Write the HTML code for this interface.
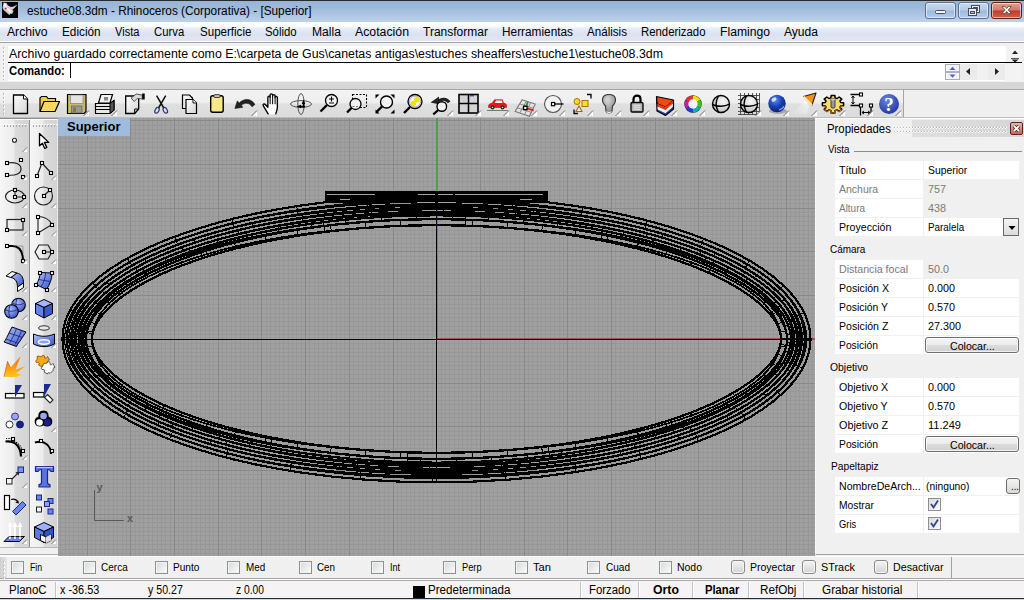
<!DOCTYPE html>
<html lang="es"><head><meta charset="utf-8"><title>estuche08.3dm - Rhinoceros (Corporativa) - [Superior]</title>
<style>
html,body{margin:0;padding:0}
body{width:1024px;height:600px;overflow:hidden;position:relative;background:#f0f0f0;font-family:"Liberation Sans",sans-serif;font-size:12px;color:#000}
.abs,.abs *{position:absolute}
div,span,svg{box-sizing:border-box}
span{white-space:nowrap;line-height:1;transform-origin:0 50%}
#title{left:0;top:0;width:1024px;height:22px;background:linear-gradient(#98b4d6 0,#9db9da 30%,#bed2eb 100%);border-top:1px solid #2a2a2a}
#title .t{line-height:14px;color:#000}
.wb{top:1px;height:17px;border:1px solid #5d6f8a;border-radius:3px;background:linear-gradient(#c5d7ee 0,#b4cbe8 48%,#9db9dd 52%,#b7cdea 100%);box-shadow:inset 0 0 0 1px rgba(255,255,255,.55)}
#menu{left:0;top:22px;width:1024px;height:19px;background:linear-gradient(#fff 0,#fcfcfe 22%,#e7ebf7 36%,#dde2f1 62%,#e1e5f3 100%)}
#menu span{line-height:14px}
#menuline{left:0;top:41px;width:1024px;height:3px;background:#f4f4f4;border-top:1px solid #fff}
#menuline i{left:0;top:0;width:1024px;height:1px;background:#a0a0a0}
#cmd{left:0;top:44px;width:1024px;height:38px;background:#f0f0f0}
#cmd .grip{left:3px;top:3px;width:3px;height:33px}
#cmd .box{left:8px;top:2px;width:998px;height:35px;background:#fff}
#cmd .hist{line-height:14px}
#cmd .prompt{line-height:14px}
#cmd .line{left:8px;top:18px;width:1014px;height:1px;background:#000}
#cmd .caret{left:70px;top:19px;width:1px;height:15px;background:#000}
#cmd .vs{left:1006px;top:2px;width:16px;height:16px;background:#f3f3f3}
#cmd .spin{left:945px;top:20px;width:15px;height:16px;border:1px solid #aab;background:#f4f4f6}
#cmd .hs{left:960px;top:20px;width:45px;height:16px;background:#ebebeb}
#cmd .hs2{left:1005px;top:19px;width:17px;height:18px;background:#f3f3f3}
#gap1{left:0;top:82px;width:1024px;height:8px;background:#d6d6d6;border-bottom:1px solid #a6a6a6}
#tbl{left:0;top:117px;width:1024px;height:1px;background:#bcbcbc}
#tb{left:0;top:90px;width:904px;height:28px;background:linear-gradient(#f3f3f3 0,#eeeeee 44%,#dfdfdf 52%,#dcdcdc 100%);border-right:1px solid #a4a4a4}
#tbr{left:904px;top:90px;width:120px;height:28px;background:#efefef}
#tb svg.ic{top:2px;width:24px;height:24px;overflow:visible}
#tb .fly{width:6px;height:6px}
#lt{left:0;top:118px;width:58px;height:429px;background:#e4e4e4;border-top:1px solid #909090}
#lt .wl{left:0;top:0;width:58px;height:1px;background:#fdfdfd}
#lt .col{top:0;height:429px;background:linear-gradient(90deg,#f6f6f6 0,#ececec 47%,#dbdbdb 53%,#d3d3d3 100%)}
#lt .sep{top:0;width:1px;height:429px;background:#8e8e8e}
#lt .sep2{top:0;width:1px;height:429px;background:#e8e8e8}
#lt svg.ic{width:24px;height:24px;overflow:visible}
#ltb{left:0;top:547px;width:58px;height:9px;background:linear-gradient(#f0f0f0 0,#f0f0f0 6px,#b0b0b0 6px,#b0b0b0 7px,#fbfbfb 7px);border-top:1px solid #b8b8b8}
#vp{left:58px;top:118px;width:757px;height:438px;overflow:hidden;background:#a0a0a0}
#vp .lbl{left:0;top:0;width:72px;height:18px;background:#a0bcdc}
#vp .lbl span{left:9px;top:2px;font-weight:bold;font-size:13px;line-height:14px}
#pp{left:815px;top:118px;width:209px;height:437px;background:#f0f0f0;border-left:1px solid #f8f8f8;border-top:1px solid #fcfcfc;border-bottom:1px solid #a2a2a2;font-size:11px}
#pp .ttl{line-height:14px}
#pp .hb{left:96px;top:1px;width:112px;height:17px;background:linear-gradient(90deg,#dfdfdf,#d6d6d6)}
#pp .cls{left:194px;top:3px;width:13px;height:13px;border:1px solid #5e2222;border-radius:2px;background:linear-gradient(#eab4aa,#cc6458)}
#pp .grp{line-height:13px}
#pp .gl{left:38px;top:32px;width:168px;height:1px;background:#8c8c8c}
#pp .cl{left:19px;width:88px;height:18px;background:#fff}
#pp .cv{left:108px;width:95px;height:18px;background:#fff}
#pp .cv.ro{background:#f0f0f0}
#pp .cl span{line-height:13px}
#pp .cv span{line-height:13px}
#pp span.g{color:#7a7a7a}
#pp .btn{left:1px;top:1px;width:94px;height:16px;border:1px solid #6e6e6e;border-radius:3px;background:linear-gradient(#f4f4f4 0,#ececec 48%,#dcdcdc 52%,#d0d0d0 100%);box-shadow:inset 0 0 0 1px rgba(255,255,255,.7)}
#pp .btn span{line-height:13px}
#pp .dd{left:79px;top:0;width:16px;height:18px;border:1px solid #6a6a6a;background:linear-gradient(#f4f4f4,#dcdcdc)}
#pp .dots{left:82px;top:1px;width:14px;height:16px;border:1px solid #6e6e6e;border-radius:3px;background:linear-gradient(#f4f4f4,#d8d8d8)}
#pp .dots span{line-height:13px}
#pp .chk{left:4px;top:2px;width:13px;height:13px;border:1px solid #8e8f8f;background:linear-gradient(135deg,#dcdcdc,#fafafa)}
#os{left:0;top:556px;width:1024px;height:24px;background:#f0f0f0;border-top:1px solid #fdfdfd;border-bottom:1px solid #fbfbfb;font-size:11px}
#os span{line-height:13px}
#os .cb{top:4px;width:13px;height:13px;border:1px solid #8e8f8f;background:linear-gradient(135deg,#d4d8dc,#fcfcfc);box-shadow:inset 0 0 0 1px #f4f4f4}
#os .cb.r{border-radius:3px;width:14px;height:14px;top:3px;background:linear-gradient(#f4f4f4,#d4d4d4);border-color:#8a8a8a}
#os .end{left:951px;top:0px;width:1px;height:21px;background:#a0a0a0}
#os .bl{left:0;top:21px;width:1024px;height:1px;background:#a8a8a8}
#os .gr{left:0;top:0;width:7px;height:21px;background:linear-gradient(90deg,#cfcfcf,#e6e6e6)}
#st{left:0;top:580px;width:1024px;height:18px;background:#f5f3f3;border-top:1px solid #adadad;font-size:12px}
#st span{line-height:14px}
#st i{top:1px;width:2px;height:16px;background:linear-gradient(90deg,#c4c4c4 50%,#fff 50%)}
#st .sw{left:413px;top:5px;width:12px;height:12px;background:#000}
#stb{left:0;top:598px;width:1024px;height:2px;background:#c4d8ee;border-top:1px solid #2a2a2a}

</style></head>
<body>
<div id="title" class="abs">
 <svg width="16" height="16" style="left:2px;top:1px" viewBox="0 0 16 16"><rect width="16" height="16" fill="#050505"/><path d="M1.500 0.500l3 .5 1.500 2.500 3 1.500 2.500-.5 4-2-3 3.500-2 1.500 1 2-1.500 2.500-1.500-.5-1 1.500-1.500-1-2-2-2-1.500-1.500-2.500z" fill="#cfcfcf"/><path d="M2 1l2 1.500 1 3 3 2 1.500 3-1.500.5-2.500-3-3-1z" fill="#f4f4f4"/><circle cx="3.600" cy="6.500" r="1" fill="#e01818"/></svg>
 <span class="t" style="left:26.5px;top:3px;font-size:12px;transform:scaleX(0.983);">estuche08.3dm - Rhinoceros (Corporativa) - [Superior]</span>
 <div class="wb" style="left:925px;width:31px"><svg width="29" height="15" style="left:0;top:0"><rect x="9.5" y="7.5" width="10" height="3" rx="1" fill="#f4f4f4" stroke="#454c5c"/></svg></div>
 <div class="wb" style="left:958px;width:31px"><svg width="29" height="15" style="left:0;top:0"><rect x="12.5" y="2.5" width="8" height="7" fill="#e8eef8" stroke="#454c5c"/><rect x="14.5" y="4.5" width="4" height="3" fill="#a9c0e0" stroke="#454c5c"/><rect x="9.5" y="5.5" width="8" height="7" fill="#e8eef8" stroke="#454c5c"/><rect x="11.5" y="8.5" width="4" height="2" fill="#a9c0e0" stroke="#454c5c"/></svg></div>
 <div class="wb" style="left:991px;width:31px;border-color:#5c1f1f;background:linear-gradient(#e0a090 0,#d4776a 48%,#c03c28 52%,#d0604a 100%)"><svg width="29" height="15" style="left:0;top:0"><path d="M10 3.5h3l1.7 2 1.700-2h3l-3.200 3.500 3.200 3.500h-3l-1.700-2-1.700 2h-3l3.200-3.500z" fill="#f6f6f6" stroke="#5a4a4a" stroke-width=".8"/></svg></div>
</div>

<div id="menu" class="abs">
<span style="left:7.1px;top:3px;font-size:12px;transform:scaleX(1.015);">Archivo</span>
<span style="left:62.2px;top:3px;font-size:12px;transform:scaleX(0.981);">Edición</span>
<span style="left:115.3px;top:3px;font-size:12px;transform:scaleX(0.922);">Vista</span>
<span style="left:154.4px;top:3px;font-size:12px;transform:scaleX(0.944);">Curva</span>
<span style="left:199.6px;top:3px;font-size:12px;transform:scaleX(0.963);">Superficie</span>
<span style="left:265.4px;top:3px;font-size:12px;transform:scaleX(0.947);">Sólido</span>
<span style="left:312px;top:3px;font-size:12px;transform:scaleX(1.011);">Malla</span>
<span style="left:355px;top:3px;font-size:12px;transform:scaleX(1.025);">Acotación</span>
<span style="left:423px;top:3px;font-size:12px;">Transformar</span>
<span style="left:502px;top:3px;font-size:12px;transform:scaleX(0.986);">Herramientas</span>
<span style="left:587px;top:3px;font-size:12px;transform:scaleX(0.967);">Análisis</span>
<span style="left:641px;top:3px;font-size:12px;transform:scaleX(0.948);">Renderizado</span>
<span style="left:720px;top:3px;font-size:12px;transform:scaleX(1.013);">Flamingo</span>
<span style="left:784px;top:3px;font-size:12px;transform:scaleX(1.006);">Ayuda</span>
</div>
<div id="menuline" class="abs"><i></i></div>
<div id="cmd" class="abs">
 <svg class="grip" width="3" height="33"><path d="M0.500 0v33" stroke="#c0c0c0" stroke-width="1" stroke-dasharray="2 2"/><path d="M1.500 1v33" stroke="#fff" stroke-width="1" stroke-dasharray="2 2"/></svg>
 <div class="box"></div>
 <div class="vs"><svg width="16" height="17" style="left:0;top:-1px"><path d="M6 9l3-3.500 3 3.500z" fill="#222"/><path d="M5.500 14.500l3.500 3 3.500-3z" fill="#222"/><path d="M5 13.500h8" stroke="#555" stroke-width="1"/></svg></div>
 <span class="hist" style="left:9.4px;top:3px;font-size:12px;transform:scaleX(1.029);">Archivo guardado correctamente como E:\carpeta de Gus\canetas antigas\estuches sheaffers\estuche1\estuche08.3dm</span>
 <div class="line"></div>
 <span class="prompt" style="left:9.4px;top:20.3px;font-size:12px;font-weight:bold;transform:scaleX(0.942);">Comando:</span>
 <div class="caret"></div>
 <div class="spin"><svg width="13" height="14" style="left:0;top:0"><path d="M0 7h13" stroke="#99a" stroke-width="1.500"/><path d="M3.500 5l3-3.200 3 3.200z" fill="#4a64c0"/><path d="M3.500 9.500l3 3.200 3-3.200z" fill="#4a64c0"/></svg></div>
 <div class="hs"><svg width="45" height="16" style="left:0;top:0"><rect x="17" y="0" width="11" height="16" fill="#f1f1f1"/><path d="M10 4v7l-4-3.500z" fill="#222"/><path d="M35 4v7l4-3.500z" fill="#222"/></svg></div>
 <div class="hs2"></div>
</div>
<div id="gap1" class="abs"></div>

<div id="tb" class="abs">
<svg width="0" height="0" style="left:0;top:0"><defs><linearGradient id="gPage" x1="0" y1="0" x2="1" y2="1"><stop offset="0" stop-color="#fdfdfd"/><stop offset="1" stop-color="#d4d4d4"/></linearGradient></defs></svg>
<svg style="left:3px;top:3px" width="3" height="22"><path d="M0.500 0v22" stroke="#bcbcbc" stroke-width="1" stroke-dasharray="2 2"/><path d="M1.500 1v22" stroke="#fff" stroke-width="1" stroke-dasharray="2 2"/></svg>
<svg class="ic" style="left:9px" viewBox="0 0 24 24"><path d="M4.500 3h10l4 4v14.500h-14z" fill="url(#gPage)" stroke="#000" stroke-width="1.300"/><path d="M14.500 3v4h4" fill="#fff" stroke="#000" stroke-width="1"/></svg>
<svg class="ic" style="left:37px" viewBox="0 0 24 24"><path d="M3 19.500v-13.500l1.500-1.500h5l1.500 2h7.500v3" fill="#f5c84a" stroke="#000" stroke-width="1.200"/><path d="M3 19.500l4-10h15.500l-4.500 10z" fill="#fbd863" stroke="#000" stroke-width="1.200" stroke-linejoin="round"/></svg>
<svg class="ic" style="left:65px" viewBox="0 0 24 24"><path d="M2.500 2.500h18.500v17l-2 2h-16.500z" fill="#c9b96a" stroke="#000" stroke-width="1.200"/><rect x="5.500" y="3" width="12.500" height="8.500" fill="#e4e4e4" stroke="#777" stroke-width=".6"/><rect x="6.500" y="14" width="10.500" height="7" fill="#9a9a9a" stroke="#555" stroke-width=".6"/><rect x="8" y="15.500" width="3" height="4.500" fill="#8a7a30"/><path d="M24 18.500v5.500h-5.500z" fill="#fff"/><path d="M18.500 24l5.500-5.500" stroke="#666" stroke-width="1" fill="none"/></svg>
<svg class="ic" style="left:93px" viewBox="0 0 24 24"><path d="M5.500 11l2.500-8.500h11.500l-2.500 8.500z" fill="#f4f4f4" stroke="#000" stroke-width="1.200"/><rect x="11" y="5" width="4" height="3.500" fill="#888"/><path d="M2.500 11.500h14.500l4-3v9.500l-4 3.500h-14.500z" fill="#e8e8e8" stroke="#000" stroke-width="1.200"/><path d="M17 11.500v10l4-3.500v-9.500z" fill="#555" stroke="#000" stroke-width="1"/><path d="M2.500 14.500h14.500M2.500 17.500h14.500" stroke="#000" stroke-width="1.100"/><path d="M24 18.500v5.500h-5.500z" fill="#fff"/><path d="M18.500 24l5.500-5.500" stroke="#666" stroke-width="1" fill="none"/></svg>
<svg class="ic" style="left:121px" viewBox="0 0 24 24"><g transform="translate(1.2,0)"><path d="M3.500 4h13v13l-4 4.500h-9z" fill="url(#gPage)" stroke="#000" stroke-width="1.300"/><path d="M16.500 17h-4v4.500" fill="none" stroke="#000" stroke-width="1"/><path d="M9 6l5-4 6 1v4l-5-.5-3 3z" fill="#d8d8d8" stroke="#333" stroke-width=".8"/><rect x="20" y="1.500" width="2.500" height="6" fill="#000"/></g></svg>
<svg class="ic" style="left:149px" viewBox="0 0 24 24"><path d="M7.600 3.600l7.200 12.400M16.700 3.600l-7.200 12.400" stroke="#111" stroke-width="1.500" fill="none"/><ellipse cx="8" cy="18.300" rx="1.900" ry="3" transform="rotate(28 8 18.300)" fill="none" stroke="#2a3a7a" stroke-width="1.200"/><ellipse cx="16.300" cy="18.300" rx="1.900" ry="3" transform="rotate(-28 16.300 18.300)" fill="none" stroke="#2a3a7a" stroke-width="1.200"/></svg>
<svg class="ic" style="left:177px" viewBox="0 0 24 24"><path d="M5.500 3h7l3 3v10.500h-10z" fill="url(#gPage)" stroke="#000" stroke-width="1.200"/><path d="M9 7.500h7l3.500 3.500v10.500h-10.500z" fill="url(#gPage)" stroke="#000" stroke-width="1.200"/><path d="M16 7.500v3.500h3.500" fill="#fff" stroke="#000" stroke-width=".9"/></svg>
<svg class="ic" style="left:205px" viewBox="0 0 24 24"><g transform="translate(1.2,0.3)"><rect x="4.500" y="3.500" width="12.500" height="16.500" rx="2" fill="#f7e98a" stroke="#000" stroke-width="1.400"/><rect x="7.500" y="2.500" width="6.500" height="2.500" rx="1" fill="#eee" stroke="#000" stroke-width=".9"/></g></svg>
<svg class="ic" style="left:233px" viewBox="0 0 24 24"><path d="M1.900 16.500L4.300 8.900L6.300 11C10 6.500 18 5.500 21.900 12.400L19 14.800C16.500 10.500 12 10.500 8.300 13.200L9.800 15.300Z" fill="#222" stroke="#000" stroke-width=".5"/><path d="M24 18.500v5.500h-5.500z" fill="#fff"/><path d="M18.500 24l5.500-5.500" stroke="#666" stroke-width="1" fill="none"/></svg>
<svg class="ic" style="left:261px" viewBox="0 0 24 24"><g transform="translate(-1.6,-1.4) scale(1.13)"><path d="M8 21l-4.500-7.500c-.8-1.300.7-2.300 1.700-1.200l2.300 2.500v-8.800c0-1.500 2-1.500 2 0v-2c0-1.500 2.200-1.500 2.200 0v.700c0-1.500 2.200-1.500 2.200 0v1.500c0-1.400 2-1.400 2 0v8.300c0 2.500-1 4-1.500 6.500" fill="#fff" stroke="#000" stroke-width="1.200" stroke-linejoin="round"/><path d="M9.500 6v6M11.700 4.500v7.500M13.900 5.500v6.500" stroke="#000" stroke-width=".9"/></g></svg>
<svg class="ic" style="left:289px" viewBox="0 0 24 24"><ellipse cx="12" cy="12" rx="10.500" ry="3.400" fill="none" stroke="#555" stroke-width="1"/><ellipse cx="12" cy="12" rx="3.200" ry="10.500" fill="none" stroke="#555" stroke-width="1"/><path d="M14.500 7.500l1.800 4.500h-3.600zM7.500 14.500l4.500-1.800v3.600z" fill="#000"/><path d="M14.500 11v5M11 14.500h5" stroke="#000" stroke-width="1.500"/></svg>
<svg class="ic" style="left:317px" viewBox="0 0 24 24"><circle cx="14.500" cy="8.500" r="6" fill="#f4f4f4" stroke="#000" stroke-width="1.300"/><path d="M10 13l-6.500 6.500" stroke="#000" stroke-width="2.400"/><path d="M12 7h5M14.500 4.500v5M12 11h5" stroke="#000" stroke-width="1.100"/></svg>
<svg class="ic" style="left:345px" viewBox="0 0 24 24"><rect x="7.500" y="2.500" width="14" height="13" fill="none" stroke="#000" stroke-width="1.100" stroke-dasharray="2 1.500"/><circle cx="10.500" cy="12" r="5.500" fill="#f0f0f0" stroke="#000" stroke-width="1.300"/><path d="M6.500 16l-4.500 4.500" stroke="#000" stroke-width="2.400"/><path d="M7.500 14.500h2M11 14.500h2" stroke="#555" stroke-width=".8"/></svg>
<svg class="ic" style="left:373px" viewBox="0 0 24 24"><path d="M2.500 2.500h4l-4 4zM21.500 2.500h-4l4 4zM2.500 21.500h4l-4-4zM21.500 21.500h-4l4-4z" fill="#000"/><circle cx="13.500" cy="10" r="6" fill="#f4f4f4" stroke="#000" stroke-width="1.400"/><path d="M9 14.500l-5 5" stroke="#000" stroke-width="2.400"/></svg>
<svg class="ic" style="left:401px" viewBox="0 0 24 24"><circle cx="14" cy="9.500" r="7" fill="#f4f4f4" stroke="#000" stroke-width="1.300"/><circle cx="14" cy="9.500" r="5.500" fill="none" stroke="#888" stroke-width=".7"/><circle cx="16" cy="7.500" r="3" fill="#f0e020"/><circle cx="12.500" cy="11.500" r="2.700" fill="#f0e020"/><path d="M9 15l-6 6" stroke="#000" stroke-width="2.400"/></svg>
<svg class="ic" style="left:429px" viewBox="0 0 24 24"><path d="M1.500 10.500l8.500-6v2.500c4.500-2.500 9-1.500 11.500 2.500l-2.700 1.800c-2-3-5-3.300-8-1.500l1 3z" fill="#222"/><circle cx="12.800" cy="14.500" r="4.800" fill="#f4f4f4" stroke="#000" stroke-width="1.400"/><path d="M9.300 18l-5 4.300" stroke="#000" stroke-width="2.300"/><path d="M24 18.500v5.500h-5.500z" fill="#fff"/><path d="M18.500 24l5.500-5.500" stroke="#666" stroke-width="1" fill="none"/></svg>
<svg class="ic" style="left:457px" viewBox="0 0 24 24"><g transform="translate(-1,0)"><rect x="3" y="2.500" width="19" height="18.500" fill="#d4d4d4" stroke="#000" stroke-width="1.600"/><path d="M12.500 2.500v18.500M3 11.500h19" stroke="#000" stroke-width="1.500"/><rect x="14" y="3.300" width="4" height="1" fill="#1a2a9a"/></g><path d="M24 18.500v5.500h-5.500z" fill="#fff"/><path d="M18.500 24l5.500-5.500" stroke="#666" stroke-width="1" fill="none"/></svg>
<svg class="ic" style="left:485px" viewBox="0 0 24 24"><path d="M3.500 14.500c0-2 1-3 3.500-3.200l2.500-3.600h8l1 3.400c2 .3 3 1 3 2.500v1.900h-18z" fill="#e81818" stroke="#a00" stroke-width=".5"/><path d="M11 8.500h6l.6 2.600h-8z" fill="#fff"/><circle cx="7.500" cy="15.500" r="2" fill="#222"/><circle cx="7.500" cy="15.500" r=".8" fill="#ddd"/><circle cx="17.500" cy="15.500" r="2" fill="#222"/><circle cx="17.500" cy="15.500" r=".8" fill="#ddd"/><path d="M2 18.500h21" stroke="#777" stroke-width="1"/><path d="M24 18.500v5.500h-5.500z" fill="#fff"/><path d="M18.500 24l5.500-5.500" stroke="#666" stroke-width="1" fill="none"/></svg>
<svg class="ic" style="left:513px" viewBox="0 0 24 24"><g transform="translate(0,1.5) scale(1.06)"><path d="M8.500 6l12.500 4-5.500 11.500-13.500-4.500z" fill="#e4e4e4" stroke="#777" stroke-width="1"/><path d="M6.300 9.800l12.900 4.100M4.200 13.500l13.200 4.300M12.500 7.300l-6 11M16.700 8.600l-5.800 11.300" stroke="#777" stroke-width=".8"/><path d="M12 13l2-5" stroke="#1a9a2a" stroke-width="1.800"/><path d="M13 14l6.500 2" stroke="#d02020" stroke-width="1.800"/><rect x="10" y="12" width="3.200" height="3.200" fill="#fff" stroke="#000" stroke-width="1.200"/></g><path d="M24 18.500v5.500h-5.500z" fill="#fff"/><path d="M18.500 24l5.500-5.500" stroke="#666" stroke-width="1" fill="none"/></svg>
<svg class="ic" style="left:541px" viewBox="0 0 24 24"><g transform="translate(1,0)"><circle cx="11" cy="12" r="8.500" fill="#f2f2f2" stroke="#555" stroke-width="1.100"/><path d="M12 12h9.500" stroke="#000" stroke-width="1.300"/><rect x="9.500" y="10.500" width="3.200" height="3.200" fill="#fff" stroke="#000" stroke-width="1.200"/></g><path d="M24 18.500v5.500h-5.500z" fill="#fff"/><path d="M18.500 24l5.500-5.500" stroke="#666" stroke-width="1" fill="none"/></svg>
<svg class="ic" style="left:569px" viewBox="0 0 24 24"><g transform="translate(1.5,0)"><path d="M16.500 2.500h4v4M3.500 17.500v4h4" fill="none" stroke="#000" stroke-width="1.300"/><circle cx="6.500" cy="9.500" r="3" fill="#f8d820" stroke="#b07000" stroke-width="1"/><rect x="11.500" y="8.500" width="6" height="6" fill="#f8e020" stroke="#b07000" stroke-width="1"/><path d="M8.500 14l3 5.500h-6z" fill="#f4f0e0" stroke="#b06010" stroke-width="1.100"/></g><path d="M24 18.500v5.500h-5.500z" fill="#fff"/><path d="M18.500 24l5.500-5.500" stroke="#666" stroke-width="1" fill="none"/></svg>
<svg class="ic" style="left:597px" viewBox="0 0 24 24"><g transform="translate(1,0)"><defs><radialGradient id="gBulb" cx=".4" cy=".3" r=".7"><stop offset="0" stop-color="#d8d8d8"/><stop offset="1" stop-color="#8a8a8a"/></radialGradient></defs><path d="M11 2.500c-8.500 0-7.500 8-3.500 11.500l.5 5c.3 2.500 5.700 2.500 6 0l.5-5c4-3.500 5-11.500-3.500-11.500z" fill="url(#gBulb)" stroke="#333" stroke-width="1.100"/><path d="M8.500 19.500c1 1.500 4 1.500 5 0" stroke="#eee" stroke-width="1.200" fill="none"/></g><path d="M24 18.500v5.500h-5.500z" fill="#fff"/><path d="M18.500 24l5.500-5.500" stroke="#666" stroke-width="1" fill="none"/></svg>
<svg class="ic" style="left:625px" viewBox="0 0 24 24"><path d="M8.500 11v-4c0-4.500 7-4.500 7 0v4" fill="none" stroke="#000" stroke-width="2.200"/><rect x="6" y="10.500" width="12" height="9.500" rx="1.200" fill="#b4b4b4" stroke="#000" stroke-width="1.300"/><path d="M8.500 13.300h7M8.500 15.300h7M8.500 17.300h7" stroke="#e8e8e8" stroke-width="1"/><path d="M24 18.500v5.500h-5.500z" fill="#fff"/><path d="M18.500 24l5.500-5.500" stroke="#666" stroke-width="1" fill="none"/></svg>
<svg class="ic" style="left:653px" viewBox="0 0 24 24"><path d="M3.500 4.500l17 3.500-8 7-8.500-3.500z" fill="#f04a10" stroke="#000" stroke-width="1"/><path d="M4 11.500l8.500 3.500 8-7v3.300l-8 7-8.500-3.800z" fill="#e83818"/><path d="M4 14.500l8.500 3.800 8-7v3l-8 7-8.500-4z" fill="#f4f4f4"/><path d="M4 17.300l8.500 4 8-7v2.700l-8 6.500-8.500-4.500z" fill="#2040b0"/><path d="M3.500 4.500l.5 14.500 8.500 4.500 8-6.500v-9" fill="none" stroke="#000" stroke-width="1.200" stroke-linejoin="round"/><path d="M24 18.500v5.500h-5.500z" fill="#fff"/><path d="M18.500 24l5.500-5.500" stroke="#666" stroke-width="1" fill="none"/></svg>
<svg class="ic" style="left:681px" viewBox="0 0 24 24"><circle cx="12" cy="12" r="8.700" fill="#222"/><path d="M12 12L12 3.700A8.300 8.300 0 0 1 19.190 7.850z" fill="#f4e000"/><path d="M12 12L19.190 7.850A8.300 8.300 0 0 1 19.190 16.150z" fill="#40c020"/><path d="M12 12L19.190 16.150A8.300 8.300 0 0 1 12 20.300z" fill="#10b0c0"/><path d="M12 12L12 20.300A8.300 8.300 0 0 1 4.810 16.150z" fill="#2040d0"/><path d="M12 12L4.810 16.150A8.300 8.300 0 0 1 4.810 7.850z" fill="#c020a0"/><path d="M12 12L4.810 7.850A8.300 8.300 0 0 1 12 3.700z" fill="#f03020"/><circle cx="12" cy="12" r="4.700" fill="#f4f4f4"/><path d="M24 18.500v5.500h-5.500z" fill="#fff"/><path d="M18.500 24l5.500-5.500" stroke="#666" stroke-width="1" fill="none"/></svg>
<svg class="ic" style="left:709px" viewBox="0 0 24 24"><defs><radialGradient id="gSph" cx=".6" cy=".35" r=".75"><stop offset="0" stop-color="#fafafa"/><stop offset="1" stop-color="#bcbcbc"/></radialGradient></defs><circle cx="12" cy="12" r="8.500" fill="url(#gSph)" stroke="#000" stroke-width="1.400"/><path d="M9.500 4c-3 5-3 11 0 16M3.500 12.500c5 2.500 12 2.500 17-.5" fill="none" stroke="#000" stroke-width="1.400"/></svg>
<svg class="ic" style="left:737px" viewBox="0 0 24 24"><path d="M3.500 1v22M7.500 1v22M11.500 1v22M15.500 1v22M19.500 1v22M22.500 1v22M1 3.500h22M1 7.500h22M1 11.500h22M1 15.500h22M1 19.500h22M1 22.500h22" stroke="#444" stroke-width=".9"/><circle cx="12" cy="12" r="8.500" fill="url(#gSph)" stroke="#000" stroke-width="1.400"/><path d="M9.500 4c-3 5-3 11 0 16M3.500 12.500c5 2.500 12 2.500 17-.5" fill="none" stroke="#000" stroke-width="1.400"/><path d="M24 18.500v5.500h-5.500z" fill="#fff"/><path d="M18.500 24l5.500-5.500" stroke="#666" stroke-width="1" fill="none"/></svg>
<svg class="ic" style="left:765px" viewBox="0 0 24 24"><defs><radialGradient id="gBlue" cx=".4" cy=".3" r=".8"><stop offset="0" stop-color="#5a8af0"/><stop offset=".5" stop-color="#1840b0"/><stop offset="1" stop-color="#061860"/></radialGradient></defs><ellipse cx="13" cy="19" rx="9" ry="3" fill="#000" opacity=".25"/><circle cx="12" cy="11.500" r="8.700" fill="url(#gBlue)"/><ellipse cx="9" cy="7.500" rx="2.800" ry="1.800" transform="rotate(-35 9 7.500)" fill="#dfe8ff" opacity=".9"/><path d="M14 18c2.500-.5 4-2 5-4" stroke="#6a9af8" stroke-width="1.400" fill="none"/><path d="M24 18.500v5.500h-5.500z" fill="#fff"/><path d="M18.500 24l5.500-5.500" stroke="#666" stroke-width="1" fill="none"/></svg>
<svg class="ic" style="left:793px" viewBox="0 0 24 24"><defs><linearGradient id="gCone" x1="1" y1="0" x2="0" y2="1"><stop offset="0" stop-color="#fff" stop-opacity=".6"/><stop offset="1" stop-color="#fff" stop-opacity="0"/></linearGradient></defs><path d="M12 8l-12 14h14l2-8z" fill="url(#gCone)"/><path d="M10.500 4.500l12.500-3.500-4 12z" fill="#f89010" stroke="#222" stroke-width="1.100" stroke-linejoin="round"/><path d="M10.500 4.500l8.500 8.500" stroke="#fce8b0" stroke-width="2"/><path d="M24 18.500v5.500h-5.500z" fill="#fff"/><path d="M18.500 24l5.500-5.500" stroke="#666" stroke-width="1" fill="none"/></svg>
<svg class="ic" style="left:821px" viewBox="0 0 24 24"><path d="M22.6 10.7L22.6 13.7L19.7 13.9L18.9 15.4L20.8 17.3L18.2 19.4L16.0 17.9L14.1 18.5L13.9 20.9L10.1 20.9L9.9 18.5L8.0 17.9L5.8 19.4L3.2 17.3L5.1 15.4L4.3 13.9L1.4 13.7L1.4 10.7L4.3 10.5L5.1 9.0L3.2 7.1L5.8 5.0L8.0 6.5L9.9 5.9L10.1 3.5L13.9 3.5L14.1 5.9L16.0 6.5L18.2 5.0L20.8 7.1L18.9 9.0L19.7 10.5Z" fill="#f6de6c" stroke="#000" stroke-width="1.500" stroke-linejoin="round"/><path d="M22.0 11.8L22.0 14.6L19.3 14.8L18.6 16.1L20.3 17.8L17.9 19.7L15.7 18.3L14.0 18.9L13.8 21.1L10.2 21.1L10.0 18.9L8.3 18.3L6.1 19.7L3.7 17.8L5.4 16.1L4.7 14.8L2.0 14.6L2.0 11.8L4.7 11.6L5.4 10.3L3.7 8.6L6.1 6.7L8.3 8.1L10.0 7.5L10.2 5.3L13.8 5.3L14.0 7.5L15.7 8.1L17.9 6.7L20.3 8.6L18.6 10.3L19.3 11.6Z" fill="none" stroke="#c8701a" stroke-width="1" stroke-linejoin="round" clip-path="inset(55% 0 0 0)"/><path d="M10 7.500c0-1.500 4-1.500 4 0v7.500c0 1.500-4 1.500-4 0z" fill="#9a9a9a" stroke="#333" stroke-width=".9"/><ellipse cx="12" cy="7.500" rx="2" ry="1" fill="#ccc"/><path d="M24 18.500v5.500h-5.500z" fill="#fff"/><path d="M18.500 24l5.500-5.500" stroke="#666" stroke-width="1" fill="none"/></svg>
<svg class="ic" style="left:849px" viewBox="0 0 24 24"><g transform="translate(0,-1)"><path d="M1.500 3.500h9M1.500 14.500h9M11.500 15.500v9M22 15v7" stroke="#000" stroke-width="1.300" fill="none"/><rect x="10.500" y="2" width="3" height="3" fill="#fff" stroke="#000" stroke-width="1.100"/><rect x="10.500" y="13" width="3" height="3" fill="#fff" stroke="#000" stroke-width="1.100"/><rect x="20.500" y="13" width="3" height="3" fill="#fff" stroke="#000" stroke-width="1.100"/><path d="M4 5.500v7M2.500 7l1.500-2 1.500 2M2.500 11l1.500 2 1.500-2M13.500 21.500h7M15 20l-2 1.500 2 1.500M19 20l2 1.500-2 1.500" stroke="#000" stroke-width="1" fill="none"/></g><path d="M24 18.500v5.500h-5.500z" fill="#fff"/><path d="M18.500 24l5.500-5.500" stroke="#666" stroke-width="1" fill="none"/></svg>
<svg class="ic" style="left:877px" viewBox="0 0 24 24"><defs><radialGradient id="gHelp" cx=".4" cy=".3" r=".8"><stop offset="0" stop-color="#6a86e0"/><stop offset="1" stop-color="#1a2e98"/></radialGradient></defs><circle cx="12" cy="12" r="10" fill="url(#gHelp)"/><text x="12" y="18.500" text-anchor="middle" font-family="Liberation Serif,serif" font-weight="bold" font-size="19" fill="#fff">?</text><path d="M24 18.500v5.500h-5.500z" fill="#fff"/><path d="M18.500 24l5.500-5.500" stroke="#666" stroke-width="1" fill="none"/></svg>
</div><div id="tbr" class="abs"></div><div id="tbl" class="abs"></div>
<div id="lt" class="abs">
<svg width="0" height="0" style="left:0;top:0"><defs><linearGradient id="gB" x1="0" y1="0" x2="1" y2="1"><stop offset="0" stop-color="#b4c4ff"/><stop offset="1" stop-color="#3450c8"/></linearGradient><radialGradient id="gBs" cx=".4" cy=".35" r=".75"><stop offset="0" stop-color="#aebeff"/><stop offset="1" stop-color="#2c48c0"/></radialGradient><linearGradient id="gO" x1="0" y1="0" x2="0" y2="1"><stop offset="0" stop-color="#f86a00"/><stop offset="1" stop-color="#ffc820"/></linearGradient></defs></svg>
<div class="col" style="left:0;width:29px"></div><div class="sep" style="left:29px"></div><div class="col" style="left:30px;width:27px"></div><div class="sep2" style="left:57px"></div>
<div class="wl"></div>
<svg style="left:3px;top:5px" width="25" height="3"><path d="M0 0.500h25" stroke="#fff" stroke-width="1" stroke-dasharray="2 1"/><path d="M1 1.500h25M1 2.500h25" stroke="#a8a8a8" stroke-width="1" stroke-dasharray="1 2"/></svg>
<svg style="left:32px;top:5px" width="25" height="3"><path d="M0 0.500h25" stroke="#fff" stroke-width="1" stroke-dasharray="2 1"/><path d="M1 1.500h25M1 2.500h25" stroke="#a8a8a8" stroke-width="1" stroke-dasharray="1 2"/></svg>
<svg class="ic" style="left:3px;top:9px" viewBox="0 0 24 24"><circle cx="11.500" cy="12.300" r="2" fill="#fff" stroke="#222" stroke-width="1.100"/><path d="M24 19.500v4.500h-4.500z" fill="#fff"/><path d="M19.500 24l4.500-4.500" stroke="#777" stroke-width="1" fill="none"/></svg>
<svg class="ic" style="left:32px;top:9px" viewBox="0 0 24 24"><path d="M7.500 5.500v12.300l2.900-2.600 2.400 5.200 2-1-2.400-5h4.300z" fill="#fff" stroke="#000" stroke-width="1.300" stroke-linejoin="round"/></svg>
<svg class="ic" style="left:3px;top:37px" viewBox="0 0 24 24"><path d="M4 7c8-1.500 14 1 14 6s-6 7-14 6" fill="none" stroke="#222" stroke-width="1.200"/><rect x="2.5" y="5.5" width="3" height="3" fill="#fff" stroke="#000" stroke-width="1.100"/><rect x="16.5" y="2.5" width="3" height="3" fill="#fff" stroke="#000" stroke-width="1.100"/><rect x="2.5" y="17.5" width="3" height="3" fill="#fff" stroke="#000" stroke-width="1.100"/><rect x="18.5" y="19.5" width="3" height="3" fill="#fff" stroke="#000" stroke-width="1.100"/><path d="M24 19.500v4.500h-4.500z" fill="#fff"/><path d="M19.500 24l4.500-4.500" stroke="#777" stroke-width="1" fill="none"/></svg>
<svg class="ic" style="left:32px;top:37px" viewBox="0 0 24 24"><path d="M5 20l5-13 9 10" fill="none" stroke="#222" stroke-width="1.200"/><rect x="3.5" y="18.5" width="3" height="3" fill="#fff" stroke="#000" stroke-width="1.100"/><rect x="8.5" y="5.5" width="3" height="3" fill="#fff" stroke="#000" stroke-width="1.100"/><rect x="17.5" y="15.5" width="3" height="3" fill="#fff" stroke="#000" stroke-width="1.100"/><path d="M24 19.500v4.500h-4.500z" fill="#fff"/><path d="M19.500 24l4.500-4.500" stroke="#777" stroke-width="1" fill="none"/></svg>
<svg class="ic" style="left:3px;top:65px" viewBox="0 0 24 24"><ellipse cx="12" cy="12.500" rx="9.500" ry="6.500" fill="none" stroke="#222" stroke-width="1.200"/><path d="M12 6v7h9" fill="none" stroke="#222" stroke-width="1.100"/><rect x="10.5" y="4.5" width="3" height="3" fill="#fff" stroke="#000" stroke-width="1.100"/><rect x="10.5" y="11.5" width="3" height="3" fill="#fff" stroke="#000" stroke-width="1.100"/><rect x="19.5" y="11.5" width="3" height="3" fill="#fff" stroke="#000" stroke-width="1.100"/><path d="M24 19.500v4.500h-4.500z" fill="#fff"/><path d="M19.500 24l4.500-4.500" stroke="#777" stroke-width="1" fill="none"/></svg>
<svg class="ic" style="left:32px;top:65px" viewBox="0 0 24 24"><circle cx="11.500" cy="12" r="9" fill="none" stroke="#222" stroke-width="1.200"/><path d="M11.500 12l6.500-6" stroke="#222" stroke-width="1.100"/><rect x="10.5" y="10.5" width="3" height="3" fill="#fff" stroke="#000" stroke-width="1.100"/><rect x="16.5" y="4.5" width="3" height="3" fill="#fff" stroke="#000" stroke-width="1.100"/><path d="M24 19.500v4.500h-4.500z" fill="#fff"/><path d="M19.500 24l4.500-4.500" stroke="#777" stroke-width="1" fill="none"/></svg>
<svg class="ic" style="left:3px;top:93px" viewBox="0 0 24 24"><rect x="4" y="7.500" width="16" height="10.500" fill="none" stroke="#222" stroke-width="1.200"/><rect x="18.5" y="6.5" width="3" height="3" fill="#fff" stroke="#000" stroke-width="1.100"/><rect x="2.5" y="16.5" width="3" height="3" fill="#fff" stroke="#000" stroke-width="1.100"/><path d="M24 19.500v4.500h-4.500z" fill="#fff"/><path d="M19.500 24l4.500-4.500" stroke="#777" stroke-width="1" fill="none"/></svg>
<svg class="ic" style="left:32px;top:93px" viewBox="0 0 24 24"><path d="M6 4.500v16.500l14-8.500c-2-5-8-8-14-8z" fill="none" stroke="#222" stroke-width="1.100"/><rect x="4.5" y="3.5" width="3" height="3" fill="#fff" stroke="#000" stroke-width="1.100"/><rect x="18.5" y="11.5" width="3" height="3" fill="#fff" stroke="#000" stroke-width="1.100"/><rect x="4.5" y="19.5" width="3" height="3" fill="#fff" stroke="#000" stroke-width="1.100"/><path d="M24 19.500v4.500h-4.500z" fill="#fff"/><path d="M19.500 24l4.500-4.500" stroke="#777" stroke-width="1" fill="none"/></svg>
<svg class="ic" style="left:3px;top:121px" viewBox="0 0 24 24"><path d="M12 6h8v8" fill="none" stroke="#999" stroke-width="1"/><path d="M4 6h5c7 0 11 5 11 15" fill="none" stroke="#000" stroke-width="2"/><rect x="2.5" y="4.5" width="3" height="3" fill="#fff" stroke="#000" stroke-width="1.100"/><rect x="18.5" y="19.5" width="3" height="3" fill="#fff" stroke="#000" stroke-width="1.100"/><path d="M24 19.500v4.500h-4.500z" fill="#fff"/><path d="M19.500 24l4.500-4.500" stroke="#777" stroke-width="1" fill="none"/></svg>
<svg class="ic" style="left:32px;top:121px" viewBox="0 0 24 24"><path d="M3 12l4-7h9l4 7-4 7h-9z" fill="none" stroke="#222" stroke-width="1.200"/><path d="M11.500 12h8.500" stroke="#222" stroke-width="1.100"/><rect x="10.5" y="10.5" width="3" height="3" fill="#fff" stroke="#000" stroke-width="1.100"/><rect x="18.5" y="10.5" width="3" height="3" fill="#fff" stroke="#000" stroke-width="1.100"/><path d="M24 19.500v4.500h-4.500z" fill="#fff"/><path d="M19.500 24l4.500-4.500" stroke="#777" stroke-width="1" fill="none"/></svg>
<svg class="ic" style="left:3px;top:149px" viewBox="0 0 24 24"><path d="M3 8l6-4.500 5 1.500-6 4.500z" fill="#fff" stroke="#000" stroke-width="1"/><path d="M8 9.500l6-4.500c5 1.500 6.500 5 6.500 10l-6 4c0-5-2-8.500-6.500-9.500z" fill="url(#gB)" stroke="#000" stroke-width="1"/><path d="M14.500 19l6-4v4.500l-6 4z" fill="#fff" stroke="#000" stroke-width="1"/><path d="M24 19.500v4.500h-4.500z" fill="#fff"/><path d="M19.500 24l4.500-4.500" stroke="#777" stroke-width="1" fill="none"/></svg>
<svg class="ic" style="left:32px;top:149px" viewBox="0 0 24 24"><path d="M8 4.500l12 .5c0 6-2 11-5.500 16.500l-10.500-5c3-4 4-8 4-12z" fill="url(#gB)" stroke="#000" stroke-width="1"/><path d="M6.500 11.500l12 2M13.500 4.800c0 5-1.500 9.500-4.500 13.800" fill="none" stroke="#1a2a80" stroke-width=".9"/><rect x="6.5" y="3.5" width="3" height="3" fill="#fff" stroke="#000" stroke-width="1.100"/><rect x="18.5" y="3.5" width="3" height="3" fill="#fff" stroke="#000" stroke-width="1.100"/><rect x="2.5" y="15.5" width="3" height="3" fill="#fff" stroke="#000" stroke-width="1.100"/><rect x="13.5" y="20.5" width="3" height="3" fill="#fff" stroke="#000" stroke-width="1.100"/><path d="M24 19.500v4.500h-4.500z" fill="#fff"/><path d="M19.500 24l4.500-4.500" stroke="#777" stroke-width="1" fill="none"/></svg>
<svg class="ic" style="left:3px;top:177px" viewBox="0 0 24 24"><circle cx="15.500" cy="9" r="6.800" fill="url(#gBs)" stroke="#000" stroke-width="1.100"/><path d="M9.500 7c4 2.500 8.500 2.500 12.500-.5M14 2.500c-1.500 4-1.500 9 0 13" fill="none" stroke="#1a2a80" stroke-width=".9"/><circle cx="8.500" cy="15.500" r="6.800" fill="url(#gBs)" stroke="#000" stroke-width="1.100"/><path d="M2.500 13.500c4 2.500 8.500 2.500 12.500-.5M7 9c-1.500 4-1.500 9 0 13" fill="none" stroke="#1a2a80" stroke-width=".9"/><path d="M24 19.500v4.500h-4.500z" fill="#fff"/><path d="M19.500 24l4.500-4.500" stroke="#777" stroke-width="1" fill="none"/></svg>
<svg class="ic" style="left:32px;top:177px" viewBox="0 0 24 24"><path d="M3.500 7.500l8.500-4 8.500 4-8.500 4z" fill="#a4b8ff" stroke="#000" stroke-width="1"/><path d="M3.500 7.500v10l8.500 4.500v-10.500z" fill="#6482ec" stroke="#000" stroke-width="1"/><path d="M12 11.500v10.500l8.500-4.500v-10z" fill="#3a58cc" stroke="#000" stroke-width="1"/><path d="M24 19.500v4.500h-4.500z" fill="#fff"/><path d="M19.500 24l4.500-4.500" stroke="#777" stroke-width="1" fill="none"/></svg>
<svg class="ic" style="left:3px;top:205px" viewBox="0 0 24 24"><path d="M9 3l14 5-6 9c-1 1.500-2.500 3-3.500 5.500l-12.500-4.500c2-2.500 2.500-4 3.500-6z" fill="url(#gB)" stroke="#000" stroke-width="1"/><path d="M6 9l13.500 4.500M3 15l13 4.500M13.500 4.500c-1.500 4-3.500 9-6.500 14M18.500 6.500c-1.500 4-3.500 9-6.500 14" fill="none" stroke="#1a2a80" stroke-width=".9"/><path d="M24 19.500v4.500h-4.500z" fill="#fff"/><path d="M19.500 24l4.500-4.500" stroke="#777" stroke-width="1" fill="none"/></svg>
<svg class="ic" style="left:32px;top:205px" viewBox="0 0 24 24"><ellipse cx="12" cy="4" rx="5.500" ry="2.200" fill="#e8e8e8" stroke="#333" stroke-width="1"/><path d="M1.500 10c7 3 14 3 21 0v10c-7 3.500-14 3.500-21 0z" fill="url(#gB)" stroke="#000" stroke-width="1"/><ellipse cx="12" cy="18" rx="5.500" ry="2.200" fill="#8aa0f4" stroke="#fff" stroke-width="1.500"/><path d="M24 19.500v4.500h-4.500z" fill="#fff"/><path d="M19.500 24l4.500-4.500" stroke="#777" stroke-width="1" fill="none"/></svg>
<svg class="ic" style="left:3px;top:233px" viewBox="0 0 24 24"><g transform="translate(0,1.8)"><path d="M1 23l3.500-15.500 3 6.500 10-11.500-5 13.500 10-3.500-9.500 7 5.500 1.500-4.500 1.500 1.500 1z" fill="url(#gO)"/><path d="M1 23l3.500-15.500 3 6.500" fill="none" stroke="#d85000" stroke-width=".6"/></g></svg>
<svg class="ic" style="left:32px;top:233px" viewBox="0 0 24 24"><path d="M5 4.500c2-1.500 3.500 1.500 5-.5 1-1.500 3-.5 2.500 1-.5 2 2.500 1 3-.5l2 3.500c-2 0-2.500 2-1 3l-3.500 3.500c-1-1.500-3-1-3 .5l-3.500-2c1.500-1.500.5-3-1-2.500-1.500.5-2.500-1.500-1-2.500 1.500-1 .5-2.500.5-3.500z" fill="#f8a810" stroke="#7a4a00" stroke-width=".8"/><path d="M11 12.500c1.500-2 3.500-.5 4.500-2 1-1.500 3-.5 2.500 1-.5 2 2 1.500 3 0l2 4c-2 0-2.500 1.500-1.500 2.500l-3.500 3.500c-1-1.500-2.500-1-2.500.5l-3.500-2c1.500-1.500.5-3-1-2.500-1.500.5-2.500-1.500-1-2.500 1-.5 1-1.500 1-2.500z" fill="#fff" stroke="#333" stroke-width=".8"/></svg>
<svg class="ic" style="left:3px;top:261px" viewBox="0 0 24 24"><rect x="2.500" y="13.500" width="18.500" height="4.500" fill="#fff" stroke="#000" stroke-width="1.200"/><path d="M12 5h7l-5 8.500-2 4.500z" fill="#1a2a90"/></svg>
<svg class="ic" style="left:32px;top:261px" viewBox="0 0 24 24"><rect x="1.500" y="12.500" width="10.500" height="4.500" fill="#fff" stroke="#000" stroke-width="1.200"/><path d="M12 4h7l-5 9-2 4z" fill="#1a2a90"/><path d="M15.500 14.500l5.500 5.500-3 3-5.500-5.500z" fill="#fff" stroke="#222" stroke-width="1.100"/></svg>
<svg class="ic" style="left:3px;top:289px" viewBox="0 0 24 24"><circle cx="12" cy="8.500" r="3.500" fill="#9aa4f8" stroke="#1a2070" stroke-width=".8"/><circle cx="6.500" cy="16.500" r="3.500" fill="#fff" stroke="#222" stroke-width=".9"/><circle cx="17" cy="16.500" r="3.500" fill="#1a2090" stroke="#0a1050" stroke-width=".8"/></svg>
<svg class="ic" style="left:32px;top:289px" viewBox="0 0 24 24"><path d="M11.500 2.500c4 0 5.500 3 5 6 3 1 4.500 3.500 3.500 7-1 3-5 4-8.500 2-3.500 2-7.500 1-8.500-2-1-3.500.5-6 3.500-7-.5-3 1-6 5-6z" fill="#000"/><circle cx="11.500" cy="8" r="3.300" fill="#9aa4f8"/><circle cx="7.500" cy="14.500" r="3.300" fill="#fff"/><circle cx="15.500" cy="14.500" r="3.300" fill="#1a2090"/><path d="M24 19.500v4.500h-4.500z" fill="#fff"/><path d="M19.500 24l4.500-4.500" stroke="#777" stroke-width="1" fill="none"/></svg>
<svg class="ic" style="left:3px;top:317px" viewBox="0 0 24 24"><path d="M2.500 5.500c9-1 15 4 15.500 15" fill="none" stroke="#000" stroke-width="2.200"/><path d="M3 2.500h5M11 5c4 2 7 5 8 9" fill="none" stroke="#000" stroke-width="1.100" stroke-dasharray="1.200 1.200"/><rect x="8.5" y="1.5" width="3" height="3" fill="#fff" stroke="#000" stroke-width="1.100"/><rect x="18.5" y="13.5" width="3" height="3" fill="#fff" stroke="#000" stroke-width="1.100"/><path d="M24 19.500v4.500h-4.500z" fill="#fff"/><path d="M19.500 24l4.500-4.500" stroke="#777" stroke-width="1" fill="none"/></svg>
<svg class="ic" style="left:32px;top:317px" viewBox="0 0 24 24"><path d="M3 6.500c9-3 16 3 16 11.500" fill="none" stroke="#000" stroke-width="2"/><rect x="7.5" y="3.5" width="3" height="3" fill="#fff" stroke="#000" stroke-width="1.100"/><rect x="18.5" y="13.5" width="3" height="3" fill="#fff" stroke="#000" stroke-width="1.100"/></svg>
<svg class="ic" style="left:3px;top:345px" viewBox="0 0 24 24"><path d="M8 16l7-7" stroke="#222" stroke-width="1.100"/><path d="M16.500 7.500l-4 .8 3.200 3.200z" fill="#222"/><rect x="15" y="3" width="5.500" height="5.500" fill="#7a92f0" stroke="#1a2a80" stroke-width="1"/><rect x="3.500" y="14.500" width="5.500" height="5.500" fill="#f4f4f4" stroke="#222" stroke-width="1"/><path d="M24 19.500v4.500h-4.500z" fill="#fff"/><path d="M19.500 24l4.500-4.500" stroke="#777" stroke-width="1" fill="none"/></svg>
<svg class="ic" style="left:32px;top:345px" viewBox="0 0 24 24"><path d="M3.500 2.500h18v5h-2.500c-.5-1.500-1.500-2-3.500-2v13c0 1.500 1 2 2.500 2v2.500h-11v-2.500c1.500 0 2.500-.5 2.500-2v-13c-2 0-3 .5-3.500 2h-2.500z" fill="#5874e4" stroke="#1a2a80" stroke-width="1.200" stroke-linejoin="round"/><path d="M4.500 3.500h16" stroke="#b8c8ff" stroke-width="1.200"/></svg>
<svg class="ic" style="left:3px;top:373px" viewBox="0 0 24 24"><rect x="1.500" y="3.500" width="5" height="14" fill="#fff" stroke="#000" stroke-width="1.200"/><path d="M8 7.500c3-1 5.500 0 7 2.500" fill="none" stroke="#000" stroke-width="1.100"/><path d="M16 11.500l-3.500-.8 2.700-2.200z" fill="#000"/><path d="M9.500 19.500l10-10 3.500 3.500-10 10z" fill="#6a84ec" stroke="#1a2a80" stroke-width="1"/></svg>
<svg class="ic" style="left:32px;top:373px" viewBox="0 0 24 24"><rect x="4.500" y="3" width="5" height="5" fill="#6a84ec" stroke="#1a2a80" stroke-width="1"/><rect x="16" y="6.500" width="5" height="5" fill="#6a84ec" stroke="#1a2a80" stroke-width="1"/><rect x="12.500" y="9.500" width="5" height="5" fill="#8aa0f8" stroke="#1a2a80" stroke-width="1"/><rect x="4.500" y="15" width="5" height="5" fill="#f4f4f4" stroke="#222" stroke-width="1"/><rect x="16" y="17" width="5" height="5" fill="#6a84ec" stroke="#1a2a80" stroke-width="1"/></svg>
<svg class="ic" style="left:3px;top:401px" viewBox="0 0 24 24"><path d="M7 6v14M12 6v14M17 6v14" stroke="#fff" stroke-width="1.800"/><path d="M4.500 7l2.500-5 2.500 5zM9.500 7l2.500-5 2.500 5zM14.500 7l2.500-5 2.500 5z" fill="#fff"/><path d="M6 16.500h15.500l-5 5h-15.500z" fill="#6a84ec" stroke="#000" stroke-width="1"/><path d="M7 16.500v2.500M12 16.500v2.500M17 16.500v2.500" stroke="#fff" stroke-width="1.600"/><path d="M24 19.500v4.500h-4.500z" fill="#fff"/><path d="M19.500 24l4.500-4.500" stroke="#777" stroke-width="1" fill="none"/></svg>
<svg class="ic" style="left:32px;top:401px" viewBox="0 0 24 24"><path d="M2.500 7l9.500-4.500 9.500 4.500-9.500 4.500z" fill="#9cb0ff" stroke="#000" stroke-width="1"/><path d="M2.500 7v10.500l9.500 5v-11z" fill="#5a78e8" stroke="#000" stroke-width="1"/><path d="M12 11.500v11l9.500-5v-10.500z" fill="#3450c8" stroke="#000" stroke-width="1"/><path d="M8.500 14.500l5.500 2.500 5-2.500v6l-5 2.500-5.500-2.500z" fill="#fff" stroke="#000" stroke-width=".9"/><path d="M14 17v6" stroke="#000" stroke-width=".9"/><path d="M14 17l5-2.500v6l-5 2.500z" fill="#ddd"/><path d="M24 19.500v4.500h-4.500z" fill="#fff"/><path d="M19.500 24l4.500-4.500" stroke="#777" stroke-width="1" fill="none"/></svg>
</div>
<div id="ltb" class="abs"></div>
<div id="vp" class="abs">
<svg width="757" height="438" viewBox="58 118 757 438" shape-rendering="crispEdges" style="position:absolute;left:0;top:0">
<rect x="58" y="118" width="757" height="438" fill="#a0a0a0"/>
<path d="M60.5 118V556M65.5 118V556M69.5 118V556M73.5 118V556M78.5 118V556M82.5 118V556M91.5 118V556M95.5 118V556M100.5 118V556M104.5 118V556M108.5 118V556M113.5 118V556M117.5 118V556M122.5 118V556M126.5 118V556M135.5 118V556M139.5 118V556M143.5 118V556M148.5 118V556M152.5 118V556M157.5 118V556M161.5 118V556M165.5 118V556M170.5 118V556M178.5 118V556M183.5 118V556M187.5 118V556M191.5 118V556M196.5 118V556M200.5 118V556M205.5 118V556M209.5 118V556M213.5 118V556M222.5 118V556M226.5 118V556M231.5 118V556M235.5 118V556M240.5 118V556M244.5 118V556M248.5 118V556M253.5 118V556M257.5 118V556M266.5 118V556M270.5 118V556M275.5 118V556M279.5 118V556M283.5 118V556M288.5 118V556M292.5 118V556M296.5 118V556M301.5 118V556M309.5 118V556M314.5 118V556M318.5 118V556M323.5 118V556M327.5 118V556M331.5 118V556M336.5 118V556M340.5 118V556M344.5 118V556M353.5 118V556M358.5 118V556M362.5 118V556M366.5 118V556M371.5 118V556M375.5 118V556M379.5 118V556M384.5 118V556M388.5 118V556M397.5 118V556M401.5 118V556M406.5 118V556M410.5 118V556M414.5 118V556M419.5 118V556M423.5 118V556M427.5 118V556M432.5 118V556M441.5 118V556M445.5 118V556M449.5 118V556M454.5 118V556M458.5 118V556M462.5 118V556M467.5 118V556M471.5 118V556M476.5 118V556M484.5 118V556M489.5 118V556M493.5 118V556M497.5 118V556M502.5 118V556M506.5 118V556M510.5 118V556M515.5 118V556M519.5 118V556M528.5 118V556M532.5 118V556M537.5 118V556M541.5 118V556M545.5 118V556M550.5 118V556M554.5 118V556M559.5 118V556M563.5 118V556M572.5 118V556M576.5 118V556M580.5 118V556M585.5 118V556M589.5 118V556M594.5 118V556M598.5 118V556M602.5 118V556M607.5 118V556M615.5 118V556M620.5 118V556M624.5 118V556M628.5 118V556M633.5 118V556M637.5 118V556M642.5 118V556M646.5 118V556M650.5 118V556M659.5 118V556M663.5 118V556M668.5 118V556M672.5 118V556M677.5 118V556M681.5 118V556M685.5 118V556M690.5 118V556M694.5 118V556M703.5 118V556M707.5 118V556M712.5 118V556M716.5 118V556M720.5 118V556M725.5 118V556M729.5 118V556M733.5 118V556M738.5 118V556M746.5 118V556M751.5 118V556M755.5 118V556M760.5 118V556M764.5 118V556M768.5 118V556M773.5 118V556M777.5 118V556M781.5 118V556M790.5 118V556M795.5 118V556M799.5 118V556M803.5 118V556M808.5 118V556M812.5 118V556M58 125.5H815M58 129.5H815M58 133.5H815M58 138.5H815M58 142.5H815M58 147.5H815M58 151.5H815M58 155.5H815M58 160.5H815M58 168.5H815M58 173.5H815M58 177.5H815M58 181.5H815M58 186.5H815M58 190.5H815M58 195.5H815M58 199.5H815M58 203.5H815M58 212.5H815M58 216.5H815M58 221.5H815M58 225.5H815M58 230.5H815M58 234.5H815M58 238.5H815M58 243.5H815M58 247.5H815M58 256.5H815M58 260.5H815M58 265.5H815M58 269.5H815M58 273.5H815M58 278.5H815M58 282.5H815M58 286.5H815M58 291.5H815M58 299.5H815M58 304.5H815M58 308.5H815M58 313.5H815M58 317.5H815M58 321.5H815M58 326.5H815M58 330.5H815M58 334.5H815M58 343.5H815M58 348.5H815M58 352.5H815M58 356.5H815M58 361.5H815M58 365.5H815M58 369.5H815M58 374.5H815M58 378.5H815M58 387.5H815M58 391.5H815M58 396.5H815M58 400.5H815M58 404.5H815M58 409.5H815M58 413.5H815M58 417.5H815M58 422.5H815M58 431.5H815M58 435.5H815M58 439.5H815M58 444.5H815M58 448.5H815M58 452.5H815M58 457.5H815M58 461.5H815M58 466.5H815M58 474.5H815M58 479.5H815M58 483.5H815M58 487.5H815M58 492.5H815M58 496.5H815M58 500.5H815M58 505.5H815M58 509.5H815M58 518.5H815M58 522.5H815M58 527.5H815M58 531.5H815M58 535.5H815M58 540.5H815M58 544.5H815M58 549.5H815M58 553.5H815" stroke="#979797" stroke-width="1" fill="none"/>
<path d="M87.5 118V556M130.5 118V556M174.5 118V556M218.5 118V556M261.5 118V556M305.5 118V556M349.5 118V556M393.5 118V556M480.5 118V556M524.5 118V556M567.5 118V556M611.5 118V556M655.5 118V556M698.5 118V556M742.5 118V556M786.5 118V556M58 120.5H815M58 164.5H815M58 208.5H815M58 251.5H815M58 295.5H815M58 339.5H815M58 383.5H815M58 426.5H815M58 470.5H815M58 514.5H815" stroke="#898989" stroke-width="1" fill="none"/>
<rect x="436" y="118" width="2" height="221" fill="#4ba04b"/>
<rect x="437" y="338" width="378" height="2" fill="#b04a4a"/>
<g fill="none" stroke="#000" stroke-linejoin="round">
<ellipse cx="436.5" cy="339.0" rx="374.0" ry="143.3" stroke-width="2.2"/>
<path d="M806.1 339.0L805.9 343.1L805.4 347.3L804.6 351.4L803.4 355.6L801.8 359.7L799.9 363.9L797.7 368.0L795.1 372.2L792.1 376.3L788.8 380.4L785.2 384.5L781.2 388.6L776.8 392.6L772.1 396.6L767.1 400.5L761.7 404.4L756.0 408.3L750.0 412.0L743.7 415.7L737.0 419.3L730.1 422.9L722.8 426.4L715.3 429.7L707.5 433.0L699.4 436.2L691.0 439.3L682.4 442.3L673.6 445.2L664.5 448.0L655.2 450.7L645.6 453.3L635.9 455.7L625.9 458.1L615.8 460.3L605.4 462.4L595.0 464.3L584.3 466.2L573.5 467.9L562.6 469.5L551.5 470.9L540.4 472.2L529.1 473.4L517.7 474.5L506.3 475.4L494.7 476.1L483.2 476.8L471.5 477.3L459.9 477.6L448.2 477.8L436.5 477.9L424.8 477.8L413.1 477.6L401.5 477.3L389.8 476.8L378.3 476.1L366.7 475.4L355.3 474.5L343.9 473.4L332.6 472.2L321.5 470.9L310.4 469.5L299.5 467.9L288.7 466.2L278.0 464.3L267.6 462.4L257.2 460.3L247.1 458.1L237.1 455.7L227.4 453.3L217.8 450.7L208.5 448.0L199.4 445.2L190.6 442.3L182.0 439.3L173.6 436.2L165.5 433.0L157.7 429.7L150.2 426.4L142.9 422.9L136.0 419.3L129.3 415.7L123.0 412.0L117.0 408.3L111.3 404.4L105.9 400.5L100.9 396.6L96.2 392.6L91.8 388.6L87.8 384.5L84.2 380.4L80.9 376.3L77.9 372.2L75.3 368.0L73.1 363.9L71.2 359.7L69.6 355.6L68.4 351.4L67.6 347.3L67.1 343.1L66.9 339.0L67.1 334.9L67.6 330.7L68.4 326.6L69.6 322.4L71.2 318.3L73.1 314.1L75.3 310.0L77.9 305.8L80.9 301.7L84.2 297.6L87.8 293.5L91.8 289.4L96.2 285.4L100.9 281.4L105.9 277.5L111.3 273.6L117.0 269.7L123.0 266.0L129.3 262.3L136.0 258.7L142.9 255.1L150.2 251.6L157.7 248.3L165.5 245.0L173.6 241.8L182.0 238.7L190.6 235.7L199.4 232.8L208.5 230.0L217.8 227.3L227.4 224.7L237.1 222.3L247.1 219.9L257.2 217.7L267.6 215.6L278.0 213.7L288.7 211.8L299.5 210.1L310.4 208.5L321.5 207.1L332.6 205.8L343.9 204.6L355.3 203.5L366.7 202.6L378.3 201.9L389.8 201.2L401.5 200.7L413.1 200.4L424.8 200.2L436.5 200.1L448.2 200.2L459.9 200.4L471.5 200.7L483.2 201.2L494.7 201.9L506.3 202.6L517.7 203.5L529.1 204.6L540.4 205.8L551.5 207.1L562.6 208.5L573.5 210.1L584.3 211.8L595.0 213.7L605.4 215.6L615.8 217.7L625.9 219.9L635.9 222.3L645.6 224.7L655.2 227.3L664.5 230.0L673.6 232.8L682.4 235.7L691.0 238.7L699.4 241.8L707.5 245.0L715.3 248.3L722.8 251.6L730.1 255.1L737.0 258.7L743.7 262.3L750.0 266.0L756.0 269.7L761.7 273.6L767.1 277.5L772.1 281.4L776.8 285.4L781.2 289.4L785.2 293.5L788.8 297.6L792.1 301.7L795.1 305.8L797.7 310.0L799.9 314.1L801.8 318.3L803.4 322.4L804.6 326.6L805.4 330.7L805.9 334.9Z" stroke-width="2.3"/>
<path d="M770.5 280.1L774.0 283.0L777.3 285.8L780.4 288.8L783.3 291.7L786.0 294.7L788.5 297.7L790.8 300.7L792.9 303.7L794.9 306.7L796.6 309.7L798.2 312.7L799.5 315.7L800.7 318.7L801.8 321.6L802.6 324.5L803.3 327.5L803.8 330.4L804.2 333.2L804.4 336.1L804.5 339.0L804.4 341.9L804.2 344.8L803.8 347.6L803.3 350.5L802.6 353.5L801.8 356.4L800.7 359.3L799.5 362.3L798.2 365.3L796.6 368.3L794.9 371.3L792.9 374.3L790.8 377.3L788.5 380.3L786.0 383.3L783.3 386.3L780.4 389.2L777.3 392.2L774.0 395.0L770.5 397.9" stroke-width="1.600"/>
<path d="M690.0 439.7L679.6 443.3L668.9 446.6L657.9 449.8L646.5 452.9L634.9 455.7L622.9 458.4L610.7 460.9L598.3 463.2L585.6 465.3L572.7 467.2L559.6 468.9L546.4 470.5L533.0 471.9L519.4 473.0L505.8 474.0L492.1 474.9L478.2 475.5L464.4 475.9L450.4 476.2L436.5 476.3L422.6 476.2L408.6 475.9L394.8 475.5L380.9 474.9L367.2 474.0L353.6 473.0L340.0 471.9L326.6 470.5L313.4 468.9L300.3 467.2L287.4 465.3L274.7 463.2L262.3 460.9L250.1 458.4L238.1 455.7L226.5 452.9L215.1 449.8L204.1 446.6L193.4 443.3L183.0 439.7" stroke-width="1.600"/>
<path d="M183.0 238.3L193.4 234.7L204.1 231.4L215.1 228.2L226.5 225.1L238.1 222.3L250.1 219.6L262.3 217.1L274.7 214.8L287.4 212.7L300.3 210.8L313.4 209.1L326.6 207.5L340.0 206.1L353.6 205.0L367.2 204.0L380.9 203.1L394.8 202.5L408.6 202.1L422.6 201.8L436.5 201.7L450.4 201.8L464.4 202.1L478.2 202.5L492.1 203.1L505.8 204.0L519.4 205.0L533.0 206.1L546.4 207.5L559.6 209.1L572.7 210.8L585.6 212.7L598.3 214.8L610.7 217.1L622.9 219.6L634.9 222.3L646.5 225.1L657.9 228.2L668.9 231.4L679.6 234.7L690.0 238.3" stroke-width="1.600"/>
<path d="M801.9 339.0L801.7 342.8L801.3 346.6L800.5 350.4L799.4 354.3L797.9 358.1L796.2 362.0L794.1 365.9L791.6 369.8L788.8 373.8L785.6 377.7L782.1 381.7L778.3 385.6L774.0 389.5L769.5 393.3L764.6 397.2L759.3 401.0L753.7 404.7L747.8 408.4L741.6 412.1L735.1 415.6L728.2 419.1L721.1 422.5L713.6 425.9L705.9 429.1L697.9 432.3L689.6 435.4L681.1 438.3L672.3 441.2L663.3 444.0L654.0 446.6L644.6 449.2L634.9 451.6L625.0 454.0L614.9 456.2L604.6 458.2L594.2 460.2L583.6 462.0L572.9 463.7L562.0 465.3L551.0 466.8L539.9 468.1L528.7 469.2L517.4 470.3L506.0 471.2L494.5 472.0L483.0 472.6L471.4 473.1L459.8 473.4L448.1 473.6L436.5 473.7L424.9 473.6L413.2 473.4L401.6 473.1L390.0 472.6L378.5 472.0L367.0 471.2L355.6 470.3L344.3 469.2L333.1 468.1L322.0 466.8L311.0 465.3L300.1 463.7L289.4 462.0L278.8 460.2L268.4 458.2L258.1 456.2L248.0 454.0L238.1 451.6L228.4 449.2L219.0 446.6L209.7 444.0L200.7 441.2L191.9 438.3L183.4 435.4L175.1 432.3L167.1 429.1L159.4 425.9L151.9 422.5L144.8 419.1L137.9 415.6L131.4 412.1L125.2 408.4L119.3 404.7L113.7 401.0L108.4 397.2L103.5 393.3L99.0 389.5L94.7 385.6L90.9 381.7L87.4 377.7L84.2 373.8L81.4 369.8L78.9 365.9L76.8 362.0L75.1 358.1L73.6 354.3L72.5 350.4L71.7 346.6L71.3 342.8L71.1 339.0L71.3 335.2L71.7 331.4L72.5 327.6L73.6 323.7L75.1 319.9L76.8 316.0L78.9 312.1L81.4 308.2L84.2 304.2L87.4 300.3L90.9 296.3L94.7 292.4L99.0 288.5L103.5 284.7L108.4 280.8L113.7 277.0L119.3 273.3L125.2 269.6L131.4 265.9L137.9 262.4L144.8 258.9L151.9 255.5L159.4 252.1L167.1 248.9L175.1 245.7L183.4 242.6L191.9 239.7L200.7 236.8L209.7 234.0L219.0 231.4L228.4 228.8L238.1 226.4L248.0 224.0L258.1 221.8L268.4 219.8L278.8 217.8L289.4 216.0L300.1 214.3L311.0 212.7L322.0 211.2L333.1 209.9L344.3 208.8L355.6 207.7L367.0 206.8L378.5 206.0L390.0 205.4L401.6 204.9L413.2 204.6L424.9 204.4L436.5 204.3L448.1 204.4L459.8 204.6L471.4 204.9L483.0 205.4L494.5 206.0L506.0 206.8L517.4 207.7L528.7 208.8L539.9 209.9L551.0 211.2L562.0 212.7L572.9 214.3L583.6 216.0L594.2 217.8L604.6 219.8L614.9 221.8L625.0 224.0L634.9 226.4L644.6 228.8L654.0 231.4L663.3 234.0L672.3 236.8L681.1 239.7L689.6 242.6L697.9 245.7L705.9 248.9L713.6 252.1L721.1 255.5L728.2 258.9L735.1 262.4L741.6 265.9L747.8 269.6L753.7 273.3L759.3 277.0L764.6 280.8L769.5 284.7L774.0 288.5L778.3 292.4L782.1 296.3L785.6 300.3L788.8 304.2L791.6 308.2L794.1 312.1L796.2 316.0L797.9 319.9L799.4 323.7L800.5 327.6L801.3 331.4L801.7 335.2Z" stroke-width="2.3"/>
<path d="M767.9 283.4L771.3 286.2L774.5 289.0L777.5 291.8L780.3 294.7L782.9 297.5L785.3 300.4L787.5 303.3L789.5 306.1L791.4 309.0L793.0 311.8L794.5 314.7L795.7 317.5L796.9 320.3L797.8 323.0L798.6 325.7L799.2 328.4L799.7 331.1L800.0 333.7L800.2 336.4L800.3 339.0L800.2 341.6L800.0 344.3L799.7 346.9L799.2 349.6L798.6 352.3L797.8 355.0L796.9 357.7L795.7 360.5L794.5 363.3L793.0 366.2L791.4 369.0L789.5 371.9L787.5 374.7L785.3 377.6L782.9 380.5L780.3 383.3L777.5 386.2L774.5 389.0L771.3 391.8L767.9 394.6" stroke-width="1.600"/>
<path d="M688.5 435.8L678.3 439.3L667.7 442.6L656.7 445.8L645.5 448.8L633.9 451.6L622.0 454.3L609.9 456.8L597.5 459.0L584.9 461.1L572.1 463.0L559.1 464.8L545.9 466.3L532.6 467.7L519.1 468.9L505.5 469.8L491.8 470.7L478.0 471.3L464.2 471.7L450.4 472.0L436.5 472.1L422.6 472.0L408.8 471.7L395.0 471.3L381.2 470.7L367.5 469.8L353.9 468.9L340.4 467.7L327.1 466.3L313.9 464.8L300.9 463.0L288.1 461.1L275.5 459.0L263.1 456.8L251.0 454.3L239.1 451.6L227.5 448.8L216.3 445.8L205.3 442.6L194.7 439.3L184.5 435.8" stroke-width="1.600"/>
<path d="M184.5 242.2L194.7 238.7L205.3 235.4L216.3 232.2L227.5 229.2L239.1 226.4L251.0 223.7L263.1 221.2L275.5 219.0L288.1 216.9L300.9 215.0L313.9 213.2L327.1 211.7L340.4 210.3L353.9 209.1L367.5 208.2L381.2 207.3L395.0 206.7L408.8 206.3L422.6 206.0L436.5 205.9L450.4 206.0L464.2 206.3L478.0 206.7L491.8 207.3L505.5 208.2L519.1 209.1L532.6 210.3L545.9 211.7L559.1 213.2L572.1 215.0L584.9 216.9L597.5 219.0L609.9 221.2L622.0 223.7L633.9 226.4L645.5 229.2L656.7 232.2L667.7 235.4L678.3 238.7L688.5 242.2" stroke-width="1.600"/>
<path d="M798.2 339.0L798.1 342.5L797.6 346.0L796.9 349.5L795.9 353.1L794.5 356.7L792.9 360.4L790.9 364.1L788.5 367.8L785.8 371.5L782.8 375.3L779.4 379.1L775.7 382.9L771.6 386.7L767.1 390.5L762.3 394.2L757.2 397.9L751.7 401.6L745.9 405.3L739.8 408.8L733.3 412.3L726.6 415.8L719.5 419.2L712.1 422.5L704.5 425.7L696.6 428.8L688.4 431.9L679.9 434.8L671.2 437.7L662.2 440.4L653.0 443.1L643.6 445.6L634.0 448.0L624.2 450.3L614.1 452.5L603.9 454.6L593.6 456.6L583.0 458.4L572.3 460.1L561.5 461.6L550.6 463.1L539.5 464.4L528.3 465.6L517.0 466.6L505.7 467.5L494.3 468.3L482.8 468.9L471.3 469.4L459.7 469.7L448.1 469.9L436.5 470.0L424.9 469.9L413.3 469.7L401.7 469.4L390.2 468.9L378.7 468.3L367.3 467.5L356.0 466.6L344.7 465.6L333.5 464.4L322.4 463.1L311.5 461.6L300.7 460.1L290.0 458.4L279.4 456.6L269.1 454.6L258.9 452.5L248.8 450.3L239.0 448.0L229.4 445.6L220.0 443.1L210.8 440.4L201.8 437.7L193.1 434.8L184.6 431.9L176.4 428.8L168.5 425.7L160.9 422.5L153.5 419.2L146.4 415.8L139.7 412.3L133.2 408.8L127.1 405.3L121.3 401.6L115.8 397.9L110.7 394.2L105.9 390.5L101.4 386.7L97.3 382.9L93.6 379.1L90.2 375.3L87.2 371.5L84.5 367.8L82.1 364.1L80.1 360.4L78.5 356.7L77.1 353.1L76.1 349.5L75.4 346.0L74.9 342.5L74.8 339.0L74.9 335.5L75.4 332.0L76.1 328.5L77.1 324.9L78.5 321.3L80.1 317.6L82.1 313.9L84.5 310.2L87.2 306.5L90.2 302.7L93.6 298.9L97.3 295.1L101.4 291.3L105.9 287.5L110.7 283.8L115.8 280.1L121.3 276.4L127.1 272.7L133.2 269.2L139.7 265.7L146.4 262.2L153.5 258.8L160.9 255.5L168.5 252.3L176.4 249.2L184.6 246.1L193.1 243.2L201.8 240.3L210.8 237.6L220.0 234.9L229.4 232.4L239.0 230.0L248.8 227.7L258.9 225.5L269.1 223.4L279.4 221.4L290.0 219.6L300.7 217.9L311.5 216.4L322.4 214.9L333.5 213.6L344.7 212.4L356.0 211.4L367.3 210.5L378.7 209.7L390.2 209.1L401.7 208.6L413.3 208.3L424.9 208.1L436.5 208.0L448.1 208.1L459.7 208.3L471.3 208.6L482.8 209.1L494.3 209.7L505.7 210.5L517.0 211.4L528.3 212.4L539.5 213.6L550.6 214.9L561.5 216.4L572.3 217.9L583.0 219.6L593.6 221.4L603.9 223.4L614.1 225.5L624.2 227.7L634.0 230.0L643.6 232.4L653.0 234.9L662.2 237.6L671.2 240.3L679.9 243.2L688.4 246.1L696.6 249.2L704.5 252.3L712.1 255.5L719.5 258.8L726.6 262.2L733.3 265.7L739.8 269.2L745.9 272.7L751.7 276.4L757.2 280.1L762.3 283.8L767.1 287.5L771.6 291.3L775.7 295.1L779.4 298.9L782.8 302.7L785.8 306.5L788.5 310.2L790.9 313.9L792.9 317.6L794.5 321.3L795.9 324.9L796.9 328.5L797.6 332.0L798.1 335.5Z" stroke-width="2.3"/>
<path d="M765.6 286.3L768.9 289.0L772.0 291.7L774.9 294.5L777.6 297.2L780.2 300.0L782.5 302.8L784.6 305.6L786.5 308.3L788.3 311.0L789.8 313.7L791.2 316.4L792.4 319.1L793.4 321.7L794.3 324.2L795.0 326.8L795.6 329.3L796.0 331.7L796.4 334.2L796.5 336.6L796.6 339.0L796.5 341.4L796.4 343.8L796.0 346.3L795.6 348.7L795.0 351.2L794.3 353.8L793.4 356.3L792.4 358.9L791.2 361.6L789.8 364.3L788.3 367.0L786.5 369.7L784.6 372.4L782.5 375.2L780.2 378.0L777.6 380.8L774.9 383.5L772.0 386.3L768.9 389.0L765.6 391.7" stroke-width="1.600"/>
<path d="M687.3 432.3L677.1 435.8L666.6 439.1L655.7 442.2L644.5 445.2L633.0 448.0L621.2 450.7L609.2 453.1L596.8 455.4L584.3 457.5L571.5 459.4L558.6 461.1L545.5 462.6L532.2 464.0L518.8 465.2L505.2 466.2L491.6 467.0L477.9 467.6L464.1 468.0L450.3 468.3L436.5 468.4L422.7 468.3L408.9 468.0L395.1 467.6L381.4 467.0L367.8 466.2L354.2 465.2L340.8 464.0L327.5 462.6L314.4 461.1L301.5 459.4L288.7 457.5L276.2 455.4L263.8 453.1L251.8 450.7L240.0 448.0L228.5 445.2L217.3 442.2L206.4 439.1L195.9 435.8L185.7 432.3" stroke-width="1.600"/>
<path d="M185.7 245.7L195.9 242.2L206.4 238.9L217.3 235.8L228.5 232.8L240.0 230.0L251.8 227.3L263.8 224.9L276.2 222.6L288.7 220.5L301.5 218.6L314.4 216.9L327.5 215.4L340.8 214.0L354.2 212.8L367.8 211.8L381.4 211.0L395.1 210.4L408.9 210.0L422.7 209.7L436.5 209.6L450.3 209.7L464.1 210.0L477.9 210.4L491.6 211.0L505.2 211.8L518.8 212.8L532.2 214.0L545.5 215.4L558.6 216.9L571.5 218.6L584.3 220.5L596.8 222.6L609.2 224.9L621.2 227.3L633.0 230.0L644.5 232.8L655.7 235.8L666.6 238.9L677.1 242.2L687.3 245.7" stroke-width="1.600"/>
<path d="M794.3 339.0L794.2 342.2L793.8 345.4L793.1 348.6L792.2 351.9L790.9 355.2L789.4 358.6L787.5 362.1L785.3 365.6L782.7 369.2L779.8 372.8L776.6 376.4L773.0 380.1L769.0 383.8L764.7 387.5L760.0 391.1L755.0 394.7L749.6 398.3L743.9 401.9L737.9 405.4L731.5 408.9L724.8 412.3L717.9 415.6L710.6 418.9L703.0 422.1L695.2 425.2L687.0 428.2L678.6 431.1L670.0 434.0L661.1 436.7L652.0 439.3L642.6 441.8L633.1 444.3L623.3 446.5L613.3 448.7L603.2 450.8L592.9 452.7L582.4 454.5L571.7 456.2L561.0 457.8L550.1 459.2L539.1 460.5L527.9 461.7L516.7 462.7L505.4 463.6L494.0 464.4L482.6 465.0L471.1 465.5L459.6 465.8L448.1 466.0L436.5 466.1L424.9 466.0L413.4 465.8L401.9 465.5L390.4 465.0L379.0 464.4L367.6 463.6L356.3 462.7L345.1 461.7L333.9 460.5L322.9 459.2L312.0 457.8L301.3 456.2L290.6 454.5L280.1 452.7L269.8 450.8L259.7 448.7L249.7 446.5L239.9 444.3L230.4 441.8L221.0 439.3L211.9 436.7L203.0 434.0L194.4 431.1L186.0 428.2L177.8 425.2L170.0 422.1L162.4 418.9L155.1 415.6L148.2 412.3L141.5 408.9L135.1 405.4L129.1 401.9L123.4 398.3L118.0 394.7L113.0 391.1L108.3 387.5L104.0 383.8L100.0 380.1L96.4 376.4L93.2 372.8L90.3 369.2L87.7 365.6L85.5 362.1L83.6 358.6L82.1 355.2L80.8 351.9L79.9 348.6L79.2 345.4L78.8 342.2L78.7 339.0L78.8 335.8L79.2 332.6L79.9 329.4L80.8 326.1L82.1 322.8L83.6 319.4L85.5 315.9L87.7 312.4L90.3 308.8L93.2 305.2L96.4 301.6L100.0 297.9L104.0 294.2L108.3 290.5L113.0 286.9L118.0 283.3L123.4 279.7L129.1 276.1L135.1 272.6L141.5 269.1L148.2 265.7L155.1 262.4L162.4 259.1L170.0 255.9L177.8 252.8L186.0 249.8L194.4 246.9L203.0 244.0L211.9 241.3L221.0 238.7L230.4 236.2L239.9 233.7L249.7 231.5L259.7 229.3L269.8 227.2L280.1 225.3L290.6 223.5L301.3 221.8L312.0 220.2L322.9 218.8L333.9 217.5L345.1 216.3L356.3 215.3L367.6 214.4L379.0 213.6L390.4 213.0L401.9 212.5L413.4 212.2L424.9 212.0L436.5 211.9L448.1 212.0L459.6 212.2L471.1 212.5L482.6 213.0L494.0 213.6L505.4 214.4L516.7 215.3L527.9 216.3L539.1 217.5L550.1 218.8L561.0 220.2L571.7 221.8L582.4 223.5L592.9 225.3L603.2 227.2L613.3 229.3L623.3 231.5L633.1 233.7L642.6 236.2L652.0 238.7L661.1 241.3L670.0 244.0L678.6 246.9L687.0 249.8L695.2 252.8L703.0 255.9L710.6 259.1L717.9 262.4L724.8 265.7L731.5 269.1L737.9 272.6L743.9 276.1L749.6 279.7L755.0 283.3L760.0 286.9L764.7 290.5L769.0 294.2L773.0 297.9L776.6 301.6L779.8 305.2L782.7 308.8L785.3 312.4L787.5 315.9L789.4 319.4L790.9 322.8L792.2 326.1L793.1 329.4L793.8 332.6L794.2 335.8Z" stroke-width="2.3"/>
<path d="M763.2 289.4L766.4 292.0L769.4 294.6L772.2 297.3L774.9 300.0L777.3 302.6L779.5 305.3L781.5 308.0L783.4 310.6L785.0 313.2L786.5 315.7L787.8 318.3L788.9 320.7L789.8 323.2L790.6 325.6L791.3 327.9L791.8 330.2L792.2 332.4L792.5 334.6L792.6 336.8L792.7 339.0L792.6 341.2L792.5 343.4L792.2 345.6L791.8 347.8L791.3 350.1L790.6 352.4L789.8 354.8L788.9 357.3L787.8 359.7L786.5 362.3L785.0 364.8L783.4 367.4L781.5 370.0L779.5 372.7L777.3 375.4L774.9 378.0L772.2 380.7L769.4 383.4L766.4 386.0L763.2 388.6" stroke-width="1.600"/>
<path d="M686.0 428.6L675.9 432.1L665.5 435.3L654.7 438.5L643.5 441.5L632.1 444.2L620.4 446.9L608.4 449.3L596.1 451.6L583.6 453.6L571.0 455.5L558.1 457.2L545.0 458.8L531.8 460.1L518.4 461.3L504.9 462.3L491.4 463.1L477.7 463.7L464.0 464.1L450.3 464.4L436.5 464.5L422.7 464.4L409.0 464.1L395.3 463.7L381.6 463.1L368.1 462.3L354.6 461.3L341.2 460.1L328.0 458.8L314.9 457.2L302.0 455.5L289.4 453.6L276.9 451.6L264.6 449.3L252.6 446.9L240.9 444.2L229.5 441.5L218.3 438.5L207.5 435.3L197.1 432.1L187.0 428.6" stroke-width="1.600"/>
<path d="M187.0 249.4L197.1 245.9L207.5 242.7L218.3 239.5L229.5 236.5L240.9 233.8L252.6 231.1L264.6 228.7L276.9 226.4L289.4 224.4L302.0 222.5L314.9 220.8L328.0 219.2L341.2 217.9L354.6 216.7L368.1 215.7L381.6 214.9L395.3 214.3L409.0 213.9L422.7 213.6L436.5 213.5L450.3 213.6L464.0 213.9L477.7 214.3L491.4 214.9L504.9 215.7L518.4 216.7L531.8 217.9L545.0 219.2L558.1 220.8L571.0 222.5L583.6 224.4L596.1 226.4L608.4 228.7L620.4 231.1L632.1 233.8L643.5 236.5L654.7 239.5L665.5 242.7L675.9 245.9L686.0 249.4" stroke-width="1.600"/>
<path d="M790.9 339.0L790.8 341.9L790.4 344.8L789.8 347.8L788.9 350.8L787.8 353.9L786.3 357.1L784.6 360.4L782.5 363.7L780.0 367.1L777.2 370.6L774.1 374.1L770.6 377.7L766.7 381.2L762.5 384.8L758.0 388.4L753.0 392.0L747.8 395.5L742.1 399.0L736.2 402.5L729.9 405.9L723.3 409.3L716.4 412.6L709.2 415.8L701.7 418.9L693.9 422.0L685.9 425.0L677.6 427.9L669.0 430.7L660.1 433.4L651.1 436.1L641.8 438.6L632.3 440.9L622.5 443.2L612.6 445.4L602.5 447.4L592.3 449.4L581.8 451.2L571.2 452.9L560.5 454.4L549.7 455.8L538.7 457.1L527.6 458.3L516.4 459.3L505.2 460.2L493.8 461.0L482.4 461.6L471.0 462.1L459.5 462.4L448.0 462.6L436.5 462.7L425.0 462.6L413.5 462.4L402.0 462.1L390.6 461.6L379.2 461.0L367.8 460.2L356.6 459.3L345.4 458.3L334.3 457.1L323.3 455.8L312.5 454.4L301.8 452.9L291.2 451.2L280.7 449.4L270.5 447.4L260.4 445.4L250.5 443.2L240.7 440.9L231.2 438.6L221.9 436.1L212.9 433.4L204.0 430.7L195.4 427.9L187.1 425.0L179.1 422.0L171.3 418.9L163.8 415.8L156.6 412.6L149.7 409.3L143.1 405.9L136.8 402.5L130.9 399.0L125.2 395.5L120.0 392.0L115.0 388.4L110.5 384.8L106.3 381.2L102.4 377.7L98.9 374.1L95.8 370.6L93.0 367.1L90.5 363.7L88.4 360.4L86.7 357.1L85.2 353.9L84.1 350.8L83.2 347.8L82.6 344.8L82.2 341.9L82.1 339.0L82.2 336.1L82.6 333.2L83.2 330.2L84.1 327.2L85.2 324.1L86.7 320.9L88.4 317.6L90.5 314.3L93.0 310.9L95.8 307.4L98.9 303.9L102.4 300.3L106.3 296.8L110.5 293.2L115.0 289.6L120.0 286.0L125.2 282.5L130.9 279.0L136.8 275.5L143.1 272.1L149.7 268.7L156.6 265.4L163.8 262.2L171.3 259.1L179.1 256.0L187.1 253.0L195.4 250.1L204.0 247.3L212.9 244.6L221.9 241.9L231.2 239.4L240.7 237.1L250.5 234.8L260.4 232.6L270.5 230.6L280.7 228.6L291.2 226.8L301.8 225.1L312.5 223.6L323.3 222.2L334.3 220.9L345.4 219.7L356.6 218.7L367.8 217.8L379.2 217.0L390.6 216.4L402.0 215.9L413.5 215.6L425.0 215.4L436.5 215.3L448.0 215.4L459.5 215.6L471.0 215.9L482.4 216.4L493.8 217.0L505.2 217.8L516.4 218.7L527.6 219.7L538.7 220.9L549.7 222.2L560.5 223.6L571.2 225.1L581.8 226.8L592.3 228.6L602.5 230.6L612.6 232.6L622.5 234.8L632.3 237.1L641.8 239.4L651.1 241.9L660.1 244.6L669.0 247.3L677.6 250.1L685.9 253.0L693.9 256.0L701.7 259.1L709.2 262.2L716.4 265.4L723.3 268.7L729.9 272.1L736.2 275.5L742.1 279.0L747.8 282.5L753.0 286.0L758.0 289.6L762.5 293.2L766.7 296.8L770.6 300.3L774.1 303.9L777.2 307.4L780.0 310.9L782.5 314.3L784.6 317.6L786.3 320.9L787.8 324.1L788.9 327.2L789.8 330.2L790.4 333.2L790.8 336.1Z" stroke-width="2.3"/>
<path d="M787.0 339.0L786.9 341.6L786.6 344.2L786.0 346.9L785.2 349.6L784.2 352.4L782.8 355.4L781.2 358.4L779.2 361.6L776.9 364.8L774.3 368.1L771.3 371.4L767.9 374.9L764.2 378.3L760.1 381.8L755.6 385.3L750.8 388.8L745.6 392.2L740.1 395.7L734.3 399.1L728.1 402.4L721.6 405.8L714.8 409.0L707.7 412.2L700.3 415.3L692.5 418.4L684.6 421.3L676.3 424.2L667.8 427.0L659.0 429.7L650.0 432.3L640.8 434.8L631.3 437.2L621.7 439.4L611.8 441.6L601.8 443.6L591.6 445.5L581.2 447.3L570.7 449.0L560.0 450.5L549.2 452.0L538.2 453.3L527.2 454.4L516.1 455.4L504.9 456.3L493.6 457.1L482.2 457.7L470.8 458.2L459.4 458.5L448.0 458.7L436.5 458.8L425.0 458.7L413.6 458.5L402.2 458.2L390.8 457.7L379.4 457.1L368.1 456.3L356.9 455.4L345.8 454.4L334.8 453.3L323.8 452.0L313.0 450.5L302.3 449.0L291.8 447.3L281.4 445.5L271.2 443.6L261.2 441.6L251.3 439.4L241.7 437.2L232.2 434.8L223.0 432.3L214.0 429.7L205.2 427.0L196.7 424.2L188.4 421.3L180.5 418.4L172.7 415.3L165.3 412.2L158.2 409.0L151.4 405.8L144.9 402.4L138.7 399.1L132.9 395.7L127.4 392.2L122.2 388.8L117.4 385.3L112.9 381.8L108.8 378.3L105.1 374.9L101.7 371.4L98.7 368.1L96.1 364.8L93.8 361.6L91.8 358.4L90.2 355.4L88.8 352.4L87.8 349.6L87.0 346.9L86.4 344.2L86.1 341.6L86.0 339.0L86.1 336.4L86.4 333.8L87.0 331.1L87.8 328.4L88.8 325.6L90.2 322.6L91.8 319.6L93.8 316.4L96.1 313.2L98.7 309.9L101.7 306.6L105.1 303.1L108.8 299.7L112.9 296.2L117.4 292.7L122.2 289.2L127.4 285.8L132.9 282.3L138.7 278.9L144.9 275.6L151.4 272.2L158.2 269.0L165.3 265.8L172.7 262.7L180.5 259.6L188.4 256.7L196.7 253.8L205.2 251.0L214.0 248.3L223.0 245.7L232.2 243.2L241.7 240.8L251.3 238.6L261.2 236.4L271.2 234.4L281.4 232.5L291.8 230.7L302.3 229.0L313.0 227.5L323.8 226.0L334.8 224.7L345.8 223.6L356.9 222.6L368.1 221.7L379.4 220.9L390.8 220.3L402.2 219.8L413.6 219.5L425.0 219.3L436.5 219.2L448.0 219.3L459.4 219.5L470.8 219.8L482.2 220.3L493.6 220.9L504.9 221.7L516.1 222.6L527.2 223.6L538.2 224.7L549.2 226.0L560.0 227.5L570.7 229.0L581.2 230.7L591.6 232.5L601.8 234.4L611.8 236.4L621.7 238.6L631.3 240.8L640.8 243.2L650.0 245.7L659.0 248.3L667.8 251.0L676.3 253.8L684.6 256.7L692.5 259.6L700.3 262.7L707.7 265.8L714.8 269.0L721.6 272.2L728.1 275.6L734.3 278.9L740.1 282.3L745.6 285.8L750.8 289.2L755.6 292.7L760.1 296.2L764.2 299.7L767.9 303.1L771.3 306.6L774.3 309.9L776.9 313.2L779.2 316.4L781.2 319.6L782.8 322.6L784.2 325.6L785.2 328.4L786.0 331.1L786.6 333.8L786.9 336.4Z" stroke-width="2.3"/>
<ellipse cx="436.5" cy="339.0" rx="350.5" ry="119.8" stroke-width="1.7"/>
<path d="M781.0 339.0L780.9 341.1L780.7 343.2L780.2 345.4L779.5 347.7L778.6 350.1L777.5 352.7L776.0 355.4L774.2 358.2L772.1 361.2L769.7 364.2L766.9 367.3L763.7 370.6L760.2 373.8L756.3 377.1L752.0 380.5L747.4 383.8L742.4 387.2L737.0 390.5L731.3 393.8L725.3 397.1L719.0 400.4L712.3 403.6L705.3 406.7L698.0 409.8L690.4 412.8L682.5 415.7L674.4 418.5L666.0 421.3L657.3 424.0L648.4 426.5L639.3 429.0L629.9 431.3L620.4 433.6L610.6 435.7L600.6 437.7L590.5 439.6L580.2 441.4L569.8 443.1L559.2 444.6L548.4 446.0L537.6 447.3L526.6 448.4L515.6 449.5L504.4 450.3L493.2 451.1L481.9 451.7L470.6 452.2L459.3 452.5L447.9 452.7L436.5 452.8L425.1 452.7L413.7 452.5L402.4 452.2L391.1 451.7L379.8 451.1L368.6 450.3L357.4 449.5L346.4 448.4L335.4 447.3L324.6 446.0L313.8 444.6L303.2 443.1L292.8 441.4L282.5 439.6L272.4 437.7L262.4 435.7L252.6 433.6L243.1 431.3L233.7 429.0L224.6 426.5L215.7 424.0L207.0 421.3L198.6 418.5L190.5 415.7L182.6 412.8L175.0 409.8L167.7 406.7L160.7 403.6L154.0 400.4L147.7 397.1L141.7 393.8L136.0 390.5L130.6 387.2L125.6 383.8L121.0 380.5L116.7 377.1L112.8 373.8L109.3 370.6L106.1 367.3L103.3 364.2L100.9 361.2L98.8 358.2L97.0 355.4L95.5 352.7L94.4 350.1L93.5 347.7L92.8 345.4L92.3 343.2L92.1 341.1L92.0 339.0L92.1 336.9L92.3 334.8L92.8 332.6L93.5 330.3L94.4 327.9L95.5 325.3L97.0 322.6L98.8 319.8L100.9 316.8L103.3 313.8L106.1 310.7L109.3 307.4L112.8 304.2L116.7 300.9L121.0 297.5L125.6 294.2L130.6 290.8L136.0 287.5L141.7 284.2L147.7 280.9L154.0 277.6L160.7 274.4L167.7 271.3L175.0 268.2L182.6 265.2L190.5 262.3L198.6 259.5L207.0 256.7L215.7 254.0L224.6 251.5L233.7 249.0L243.1 246.7L252.6 244.4L262.4 242.3L272.4 240.3L282.5 238.4L292.8 236.6L303.2 234.9L313.8 233.4L324.6 232.0L335.4 230.7L346.4 229.6L357.4 228.5L368.6 227.7L379.8 226.9L391.1 226.3L402.4 225.8L413.7 225.5L425.1 225.3L436.5 225.2L447.9 225.3L459.3 225.5L470.6 225.8L481.9 226.3L493.2 226.9L504.4 227.7L515.6 228.5L526.6 229.6L537.6 230.7L548.4 232.0L559.2 233.4L569.8 234.9L580.2 236.6L590.5 238.4L600.6 240.3L610.6 242.3L620.4 244.4L629.9 246.7L639.3 249.0L648.4 251.5L657.3 254.0L666.0 256.7L674.4 259.5L682.5 262.3L690.4 265.2L698.0 268.2L705.3 271.3L712.3 274.4L719.0 277.6L725.3 280.9L731.3 284.2L737.0 287.5L742.4 290.8L747.4 294.2L752.0 297.5L756.3 300.9L760.2 304.2L763.7 307.4L766.9 310.7L769.7 313.8L772.1 316.8L774.2 319.8L776.0 322.6L777.5 325.3L778.6 327.9L779.5 330.3L780.2 332.6L780.7 334.8L780.9 336.9Z" stroke-width="2.3"/>
<ellipse cx="436.5" cy="339.0" rx="344.5" ry="113.8" stroke-width="1.7"/>
<path d="M134.2 418.4L128.8 415.4L123.5 412.4L118.5 409.3L113.7 406.3L109.1 403.2L104.7 400.0L100.5 396.9L96.5 393.7L92.8 390.4L89.2 387.2L85.9 383.9L82.9 380.6L80.0 377.3L77.4 373.9L75.0 370.5L72.9 367.1L71.0 363.6L69.3 360.2L67.9 356.7L66.8 353.2L65.9 349.6L65.2 346.1L64.8 342.6L64.7 339.0L64.8 335.4L65.2 331.9L65.9 328.4L66.8 324.8L67.9 321.3L69.3 317.8L71.0 314.4L72.9 310.9L75.0 307.5L77.4 304.1L80.0 300.7L82.9 297.4L85.9 294.1L89.2 290.8L92.8 287.6L96.5 284.3L100.5 281.1L104.7 278.0L109.1 274.8L113.7 271.7L118.5 268.7L123.5 265.6L128.8 262.6L134.2 259.6" stroke-width="1.200"/>
<path d="M136.2 414.7L130.8 411.7L125.7 408.8L120.8 405.8L116.0 402.8L111.5 399.7L107.2 396.7L103.2 393.6L99.3 390.5L95.7 387.4L92.2 384.2L89.0 381.1L86.1 377.9L83.3 374.7L80.9 371.5L78.6 368.3L76.6 365.1L74.8 361.8L73.2 358.6L71.9 355.3L70.8 352.1L70.0 348.8L69.4 345.5L69.0 342.3L68.9 339.0L69.0 335.7L69.4 332.5L70.0 329.2L70.8 325.9L71.9 322.7L73.2 319.4L74.8 316.2L76.6 312.9L78.6 309.7L80.9 306.5L83.3 303.3L86.1 300.1L89.0 296.9L92.2 293.8L95.7 290.6L99.3 287.5L103.2 284.4L107.2 281.3L111.5 278.3L116.0 275.2L120.8 272.2L125.7 269.2L130.8 266.3L136.2 263.3" stroke-width="1.200"/>
<path d="M137.9 411.4L132.7 408.5L127.6 405.6L122.8 402.7L118.1 399.7L113.7 396.7L109.5 393.7L105.5 390.7L101.8 387.7L98.2 384.6L94.9 381.6L91.9 378.5L89.0 375.4L86.4 372.4L84.1 369.3L81.9 366.2L80.0 363.2L78.3 360.1L76.9 357.1L75.7 354.1L74.7 351.0L73.9 348.0L73.3 345.0L73.0 342.0L72.9 339.0L73.0 336.0L73.3 333.0L73.9 330.0L74.7 327.0L75.7 323.9L76.9 320.9L78.3 317.9L80.0 314.8L81.9 311.8L84.1 308.7L86.4 305.6L89.0 302.6L91.9 299.5L94.9 296.4L98.2 293.4L101.8 290.3L105.5 287.3L109.5 284.3L113.7 281.3L118.1 278.3L122.8 275.3L127.6 272.4L132.7 269.5L137.9 266.6" stroke-width="1.200"/>
<path d="M139.8 408.0L134.6 405.1L129.6 402.3L124.8 399.4L120.3 396.5L116.0 393.5L111.9 390.6L108.0 387.7L104.3 384.7L100.9 381.8L97.7 378.8L94.7 375.9L92.0 373.0L89.5 370.0L87.2 367.1L85.2 364.2L83.4 361.3L81.8 358.5L80.4 355.6L79.3 352.8L78.3 350.0L77.6 347.3L77.1 344.5L76.8 341.7L76.7 339.0L76.8 336.3L77.1 333.5L77.6 330.7L78.3 328.0L79.3 325.2L80.4 322.4L81.8 319.5L83.4 316.7L85.2 313.8L87.2 310.9L89.5 308.0L92.0 305.0L94.7 302.1L97.7 299.2L100.9 296.2L104.3 293.3L108.0 290.3L111.9 287.4L116.0 284.5L120.3 281.5L124.8 278.6L129.6 275.7L134.6 272.9L139.8 270.0" stroke-width="1.200"/>
<path d="M141.4 405.0L136.3 402.2L131.4 399.3L126.7 396.5L122.2 393.6L118.0 390.8L114.0 387.9L110.2 385.0L106.6 382.1L103.3 379.2L100.2 376.4L97.4 373.5L94.8 370.7L92.4 367.8L90.2 365.1L88.3 362.3L86.6 359.6L85.1 356.9L83.9 354.2L82.8 351.6L82.0 349.1L81.3 346.5L80.9 344.0L80.6 341.5L80.5 339.0L80.6 336.5L80.9 334.0L81.3 331.5L82.0 328.9L82.8 326.4L83.9 323.8L85.1 321.1L86.6 318.4L88.3 315.7L90.2 312.9L92.4 310.2L94.8 307.3L97.4 304.5L100.2 301.6L103.3 298.8L106.6 295.9L110.2 293.0L114.0 290.1L118.0 287.2L122.2 284.4L126.7 281.5L131.4 278.7L136.3 275.8L141.4 273.0" stroke-width="1.200"/>
<path d="M143.2 401.6L138.2 398.8L133.4 396.0L128.8 393.2L124.4 390.4L120.2 387.6L116.3 384.8L112.6 382.0L109.1 379.3L105.9 376.5L102.9 373.7L100.1 371.0L97.6 368.3L95.2 365.6L93.2 363.0L91.3 360.4L89.7 357.9L88.3 355.4L87.1 352.9L86.1 350.5L85.3 348.2L84.7 345.8L84.2 343.5L84.0 341.3L83.9 339.0L84.0 336.7L84.2 334.5L84.7 332.2L85.3 329.8L86.1 327.5L87.1 325.1L88.3 322.6L89.7 320.1L91.3 317.6L93.2 315.0L95.2 312.4L97.6 309.7L100.1 307.0L102.9 304.3L105.9 301.5L109.1 298.7L112.6 296.0L116.3 293.2L120.2 290.4L124.4 287.6L128.8 284.8L133.4 282.0L138.2 279.2L143.2 276.4" stroke-width="1.200"/>
<path d="M781.0 339.0L787.0 339.0M780.1 345.7L785.9 347.2M777.1 353.4L782.5 356.1M771.3 362.3L776.0 366.0M762.0 372.2L766.1 376.6M749.2 382.6L752.6 387.5M732.8 393.0L735.8 398.2M713.1 403.2L715.7 408.6M690.4 412.8L692.5 418.4M664.9 421.6L666.7 427.4M637.0 429.6L638.5 435.4M606.9 436.5L608.1 442.4M575.0 442.3L575.9 448.2M541.7 446.8L542.4 452.8M507.2 450.1L507.7 456.1M472.0 452.1L472.3 458.1M436.5 452.8L436.5 458.8M401.0 452.1L400.7 458.1M365.8 450.1L365.3 456.1M331.3 446.8L330.6 452.8M298.0 442.3L297.1 448.2M266.1 436.5L264.9 442.4M236.0 429.6L234.5 435.4M208.1 421.6L206.3 427.4M182.6 412.8L180.5 418.4M159.9 403.2L157.3 408.6M140.2 393.0L137.2 398.2M123.8 382.6L120.4 387.5M111.0 372.2L106.9 376.6M101.7 362.3L97.0 366.0M95.9 353.4L90.5 356.1M92.9 345.7L87.1 347.2M92.0 339.0L86.0 339.0M92.9 332.3L87.1 330.8M95.9 324.6L90.5 321.9M101.7 315.7L97.0 312.0M111.0 305.8L106.9 301.4M123.8 295.4L120.4 290.5M140.2 285.0L137.2 279.8M159.9 274.8L157.3 269.4M182.6 265.2L180.5 259.6M208.1 256.4L206.3 250.6M236.0 248.4L234.5 242.6M266.1 241.5L264.9 235.6M298.0 235.7L297.1 229.8M331.3 231.2L330.6 225.2M365.8 227.9L365.3 221.9M401.0 225.9L400.7 219.9M436.5 225.2L436.5 219.2M472.0 225.9L472.3 219.9M507.2 227.9L507.7 221.9M541.7 231.2L542.4 225.2M575.0 235.7L575.9 229.8M606.9 241.5L608.1 235.6M637.0 248.4L638.5 242.6M664.9 256.4L666.7 250.6M690.4 265.2L692.5 259.6M713.1 274.8L715.7 269.4M732.8 285.0L735.8 279.8M749.2 295.4L752.6 290.5M762.0 305.8L766.1 301.4M771.3 315.7L776.0 312.0M777.1 324.6L782.5 321.9M780.1 332.3L785.9 330.8M786.8 342.6L794.0 343.5M784.7 351.1L791.5 353.7M779.9 360.5L786.1 364.4M772.0 370.7L777.3 375.6M760.5 381.5L765.1 387.1M745.5 392.3L749.4 398.5M727.1 403.0L730.5 409.4M705.6 413.1L708.5 419.8M681.2 422.5L683.7 429.4M654.3 431.1L656.3 438.1M625.0 438.7L626.7 445.8M593.8 445.1L595.1 452.3M561.0 450.4L562.0 457.6M526.9 454.4L527.6 461.7M491.8 457.2L492.2 464.5M456.2 458.6L456.3 465.9M420.4 458.7L420.3 466.0M384.7 457.4L384.3 464.7M349.6 454.8L348.9 462.0M315.4 450.9L314.4 458.1M282.4 445.7L281.1 452.9M251.0 439.4L249.4 446.5M221.5 431.9L219.6 438.9M194.3 423.4L192.0 430.3M169.7 414.1L166.9 420.8M147.9 404.0L144.6 410.5M129.2 393.4L125.3 399.6M113.9 382.6L109.3 388.3M102.0 371.8L96.7 376.8M93.7 361.5L87.6 365.5M88.6 352.0L81.9 354.7M86.3 343.5L79.1 344.5M86.2 335.4L79.0 334.5M88.3 326.9L81.5 324.3M93.1 317.5L86.9 313.6M101.0 307.3L95.7 302.4M112.5 296.5L107.9 290.9M127.5 285.7L123.6 279.5M145.9 275.0L142.5 268.6M167.4 264.9L164.5 258.2M191.8 255.5L189.3 248.6M218.7 246.9L216.7 239.9M248.0 239.3L246.3 232.2M279.2 232.9L277.9 225.7M312.0 227.6L311.0 220.4M346.1 223.6L345.4 216.3M381.2 220.8L380.8 213.5M416.8 219.4L416.7 212.1M452.6 219.3L452.7 212.0M488.3 220.6L488.7 213.3M523.4 223.2L524.1 216.0M557.6 227.1L558.6 219.9M590.6 232.3L591.9 225.1M622.0 238.6L623.6 231.5M651.5 246.1L653.4 239.1M678.7 254.6L681.0 247.7M703.3 263.9L706.1 257.2M725.1 274.0L728.4 267.5M743.8 284.6L747.7 278.4M759.1 295.4L763.7 289.7M771.0 306.2L776.3 301.2M779.3 316.5L785.4 312.5M784.4 326.0L791.1 323.3M786.7 334.5L793.9 333.5M794.2 341.0L798.1 341.2M787.8 361.7L791.1 363.6M768.5 384.2L771.0 387.2M735.5 406.7L737.4 410.2M690.1 427.1L691.5 430.8M634.3 444.0L635.2 447.7M570.4 456.4L571.0 460.3M501.1 463.9L501.4 467.8M429.3 466.1L429.2 470.0M357.7 462.8L357.4 466.7M289.3 454.3L288.7 458.2M226.8 440.9L225.8 444.7M172.9 423.3L171.5 426.9M129.8 402.4L127.8 405.7M99.6 379.7L96.8 382.4M83.0 357.3L79.5 359.0M78.8 337.0L74.9 336.8M85.2 316.3L81.9 314.4M104.5 293.8L102.0 290.8M137.5 271.3L135.6 267.8M182.9 250.9L181.5 247.2M238.7 234.0L237.8 230.3M302.6 221.6L302.0 217.7M371.9 214.1L371.6 210.2M443.7 211.9L443.8 208.0M515.3 215.2L515.6 211.3M583.7 223.7L584.3 219.8M646.2 237.1L647.2 233.3M700.1 254.7L701.5 251.1M743.2 275.6L745.2 272.3M773.4 298.3L776.2 295.6M790.0 320.7L793.5 319.0M797.5 346.7L801.5 347.4M787.4 369.4L790.7 371.8M763.9 393.1L766.4 396.3M727.0 415.6L728.8 419.3M678.3 435.4L679.6 439.3M619.8 451.3L620.7 455.3M554.0 462.6L554.5 466.7M483.5 468.8L483.7 472.9M411.1 469.7L411.0 473.8M339.8 465.1L339.4 469.1M272.3 455.2L271.5 459.3M211.3 440.6L210.2 444.5M159.5 421.9L157.8 425.6M118.8 400.0L116.6 403.4M91.2 376.5L88.1 379.2M77.2 353.3L73.3 354.6M75.5 331.3L71.5 330.6M85.6 308.6L82.3 306.2M109.1 284.9L106.6 281.7M146.0 262.4L144.2 258.7M194.7 242.6L193.4 238.7M253.2 226.7L252.3 222.7M319.0 215.4L318.5 211.3M389.5 209.2L389.3 205.1M461.9 208.3L462.0 204.2M533.2 212.9L533.6 208.9M600.7 222.8L601.5 218.7M661.7 237.4L662.8 233.5M713.5 256.1L715.2 252.4M754.2 278.0L756.4 274.6M781.8 301.5L784.9 298.8M795.8 324.7L799.7 323.4M802.3 340.2L810.5 340.4M795.4 364.4L802.6 368.3M775.1 389.0L780.6 395.1M741.4 412.6L745.4 419.8M695.5 433.6L698.3 441.3M639.2 451.0L641.2 458.9M575.0 463.8L576.2 471.9M505.3 471.6L505.9 479.8M432.9 474.1L432.8 482.3M360.6 471.1L359.9 479.3M291.3 462.8L290.0 470.8M227.7 449.4L225.7 457.4M172.4 431.7L169.5 439.3M127.7 410.4L123.5 417.4M95.2 386.6L89.6 392.5M76.3 362.0L69.0 365.6M70.7 337.8L62.5 337.6M77.6 313.6L70.4 309.7M97.9 289.0L92.4 282.9M131.6 265.4L127.6 258.2M177.5 244.4L174.7 236.7M233.8 227.0L231.8 219.1M298.0 214.2L296.8 206.1M367.7 206.4L367.1 198.2M440.1 203.9L440.2 195.7M512.4 206.9L513.1 198.7M581.7 215.2L583.0 207.2M645.3 228.6L647.3 220.6M700.6 246.3L703.5 238.7M745.3 267.6L749.5 260.6M777.8 291.4L783.4 285.5M796.7 316.0L804.0 312.4M780.5 344.3L793.5 347.0M752.0 380.5L760.0 391.1M670.2 419.9L674.4 432.6M548.4 446.0L550.1 459.2M408.0 452.4L407.6 465.7M272.4 437.7L269.8 450.8M164.2 405.2L158.7 417.3M103.3 364.2L93.2 372.8M92.5 333.7L79.5 331.0M121.0 297.5L113.0 286.9M202.8 258.1L198.6 245.4M324.6 232.0L322.9 218.8M465.0 225.6L465.4 212.3M600.6 240.3L603.2 227.2M708.8 272.8L714.3 260.7M769.7 313.8L779.8 305.2" stroke-width="1"/>
</g>
<rect x="325" y="191" width="223" height="12" fill="#000"/>
<path d="M327 194.500h48M418 194.500h17M438 194.500h15M455 194.500h88M417 202.500h18M438 202.500h18M340 199.500h10M520 199.500h12" stroke="#a0a0a0" stroke-width="1" fill="none"/>
<rect x="61" y="339" width="751" height="1" fill="#000"/>
<rect x="780" y="338" width="31" height="1" fill="#000"/>
<rect x="436" y="196" width="1" height="287" fill="#000"/>
<path d="M94.5 490V520.5H124" stroke="#5a5a5a" stroke-width="1" fill="none"/>
<text x="96.5" y="491.300" font-family="Liberation Sans, sans-serif" font-weight="bold" font-size="11" fill="#5a5a5a">y</text>
<text x="127" y="521.5" font-family="Liberation Sans, sans-serif" font-weight="bold" font-size="11" fill="#5a5a5a">x</text>
</svg>
<div class="lbl"><span>Superior</span></div>
</div>

<div id="pp" class="abs">
<div class="hb"></div>
<span class="ttl" style="left:10.7px;top:3px;font-size:12px;transform:scaleX(0.947);">Propiedades</span>
<svg style="left:78px;top:7px" width="114" height="8"><path d="M0 1.500h114M0 5.500h114" stroke="#b8b8b8" stroke-width="1" stroke-dasharray="1 2"/><path d="M1 1.500h114M1 5.500h114M0 2.500h114M0 6.500h114" stroke="#fff" stroke-width="1" stroke-dasharray="1 2"/></svg>
<div class="cls"><svg width="11" height="11" style="left:0;top:0"><path d="M3 3l5 5M8 3l-5 5" stroke="#4a3030" stroke-width="3.600"/><path d="M3 3l5 5M8 3l-5 5" stroke="#fff" stroke-width="1.800"/></svg></div>
<span class="grp" style="left:11.5px;top:23.5px;font-size:11px;transform:scaleX(0.886);">Vista</span><div class="gl"></div>
<div class="cl" style="top:42px"><span style="left:4px;top:3px;font-size:11px;transform:scaleX(0.982);">Título</span></div>
<div class="cv" style="top:42px"><span style="left:4px;top:3px;font-size:11px;transform:scaleX(0.943);">Superior</span></div>
<div class="cl" style="top:61px"><span class="g" style="left:4px;top:3px;font-size:11px;transform:scaleX(0.954);">Anchura</span></div>
<div class="cv ro" style="top:61px"><span class="g" style="left:4px;top:3px;font-size:11px;transform:scaleX(0.981);">757</span></div>
<div class="cl" style="top:80px"><span class="g" style="left:4px;top:3px;font-size:11px;transform:scaleX(0.905);">Altura</span></div>
<div class="cv ro" style="top:80px"><span class="g" style="left:4px;top:3px;font-size:11px;transform:scaleX(0.981);">438</span></div>
<div class="cl" style="top:99px"><span style="left:4px;top:3px;font-size:11px;transform:scaleX(0.963);">Proyección</span></div>
<div class="cv" style="top:99px"><span style="left:3.5px;top:3px;font-size:11px;transform:scaleX(0.895);">Paralela</span><div class="dd"><svg width="16" height="17" style="left:0;top:0"><path d="M4.500 7h7l-3.500 4z" fill="#000"/></svg></div></div>
<span class="grp" style="left:13.6px;top:124px;font-size:11px;transform:scaleX(0.905);">Cámara</span>
<div class="cl" style="top:141px"><span class="g" style="left:4px;top:3px;font-size:11px;transform:scaleX(0.965);">Distancia focal</span></div>
<div class="cv ro" style="top:141px"><span class="g" style="left:4px;top:3px;font-size:11px;transform:scaleX(0.981);">50.0</span></div>
<div class="cl" style="top:160px"><span style="left:4px;top:3px;font-size:11px;transform:scaleX(0.962);">Posición X</span></div>
<div class="cv" style="top:160px"><span style="left:4px;top:3px;font-size:11px;transform:scaleX(0.981);">0.000</span></div>
<div class="cl" style="top:179px"><span style="left:4px;top:3px;font-size:11px;transform:scaleX(0.946);">Posición Y</span></div>
<div class="cv" style="top:179px"><span style="left:4px;top:3px;font-size:11px;transform:scaleX(0.981);">0.570</span></div>
<div class="cl" style="top:198px"><span style="left:4px;top:3px;font-size:11px;transform:scaleX(0.962);">Posición Z</span></div>
<div class="cv" style="top:198px"><span style="left:4px;top:3px;font-size:11px;transform:scaleX(0.981);">27.300</span></div>
<div class="cl" style="top:217px"><span style="left:4px;top:3px;font-size:11px;transform:scaleX(0.938);">Posición</span></div>
<div class="cv" style="top:217px"><div class="btn"><span style="left:23.6px;top:2px;font-size:11px;transform:scaleX(0.964);">Colocar...</span></div></div>
<span class="grp" style="left:13.6px;top:242px;font-size:11px;transform:scaleX(0.944);">Objetivo</span>
<div class="cl" style="top:259px"><span style="left:4px;top:3px;font-size:11px;transform:scaleX(0.968);">Objetivo X</span></div>
<div class="cv" style="top:259px"><span style="left:4px;top:3px;font-size:11px;transform:scaleX(0.981);">0.000</span></div>
<div class="cl" style="top:278px"><span style="left:4px;top:3px;font-size:11px;transform:scaleX(0.963);">Objetivo Y</span></div>
<div class="cv" style="top:278px"><span style="left:4px;top:3px;font-size:11px;transform:scaleX(0.981);">0.570</span></div>
<div class="cl" style="top:297px"><span style="left:4px;top:3px;font-size:11px;transform:scaleX(0.980);">Objetivo Z</span></div>
<div class="cv" style="top:297px"><span style="left:4px;top:3px;font-size:11px;transform:scaleX(1.005);">11.249</span></div>
<div class="cl" style="top:316px"><span style="left:4px;top:3px;font-size:11px;transform:scaleX(0.938);">Posición</span></div>
<div class="cv" style="top:316px"><div class="btn"><span style="left:23.6px;top:2px;font-size:11px;transform:scaleX(0.964);">Colocar...</span></div></div>
<span class="grp" style="left:14.6px;top:341px;font-size:11px;transform:scaleX(0.929);">Papeltapiz</span>
<div class="cl" style="top:358px"><span style="left:4px;top:3px;font-size:11px;transform:scaleX(0.962);">NombreDeArch...</span></div>
<div class="cv" style="top:358px"><span style="left:2px;top:3px;font-size:11px;transform:scaleX(0.936);">(ninguno)</span><div class="dots"><span style="left:3.5px;top:1px;font-size:11px;transform:scaleX(0.873);">...</span></div></div>
<div class="cl" style="top:377px"><span style="left:4px;top:3px;font-size:11px;transform:scaleX(0.934);">Mostrar</span></div>
<div class="cv" style="top:377px"><div class="chk"><svg width="11" height="11" style="left:0;top:0"><path d="M2 5l2.500 3.500 4.500-7" fill="none" stroke="#31428c" stroke-width="1.800"/></svg></div></div>
<div class="cl" style="top:396px"><span style="left:4px;top:3px;font-size:11px;transform:scaleX(0.853);">Gris</span></div>
<div class="cv" style="top:396px"><div class="chk"><svg width="11" height="11" style="left:0;top:0"><path d="M2 5l2.500 3.500 4.500-7" fill="none" stroke="#31428c" stroke-width="1.800"/></svg></div></div>
</div>
<div id="os" class="abs"><div class="gr"></div><div class="bl"></div>
<svg style="left:3px;top:4px" width="3" height="18"><path d="M0.500 0v18" stroke="#bcbcbc" stroke-width="1" stroke-dasharray="2 2"/><path d="M1.500 1v18" stroke="#fff" stroke-width="1" stroke-dasharray="2 2"/></svg>
<div class="cb" style="left:11px"></div><span style="left:29.7px;top:4px;font-size:11px;transform:scaleX(0.798);">Fin</span>
<div class="cb" style="left:83px"></div><span style="left:101px;top:4px;font-size:11px;transform:scaleX(0.910);">Cerca</span>
<div class="cb" style="left:155px"></div><span style="left:173.4px;top:4px;font-size:11px;transform:scaleX(0.918);">Punto</span>
<div class="cb" style="left:227px"></div><span style="left:245.5px;top:4px;font-size:11px;transform:scaleX(0.897);">Med</span>
<div class="cb" style="left:299px"></div><span style="left:317px;top:4px;font-size:11px;transform:scaleX(0.892);">Cen</span>
<div class="cb" style="left:371px"></div><span style="left:389.7px;top:4px;font-size:11px;transform:scaleX(0.826);">Int</span>
<div class="cb" style="left:443px"></div><span style="left:462px;top:4px;font-size:11px;transform:scaleX(0.844);">Perp</span>
<div class="cb" style="left:515px"></div><span style="left:533px;top:4px;font-size:11px;transform:scaleX(1.015);">Tan</span>
<div class="cb" style="left:587px"></div><span style="left:605.5px;top:4px;font-size:11px;transform:scaleX(0.913);">Cuad</span>
<div class="cb" style="left:659px"></div><span style="left:677px;top:4px;font-size:11px;transform:scaleX(0.951);">Nodo</span>
<div class="cb r" style="left:731px"></div><span style="left:749.5px;top:4px;font-size:11px;transform:scaleX(0.956);">Proyectar</span>
<div class="cb r" style="left:802px"></div><span style="left:821px;top:4px;font-size:11px;transform:scaleX(0.988);">STrack</span>
<div class="cb r" style="left:874px"></div><span style="left:893px;top:4px;font-size:11px;transform:scaleX(0.972);">Desactivar</span>
<div class="end"></div>
</div>
<div id="st" class="abs">
<span style="left:9.4px;top:2px;font-size:12px;transform:scaleX(0.955);">PlanoC</span>
<span style="left:60.2px;top:2px;font-size:12px;transform:scaleX(0.906);">x -36.53</span>
<span style="left:148px;top:2px;font-size:12px;transform:scaleX(0.884);">y 50.27</span>
<span style="left:236px;top:2px;font-size:12px;transform:scaleX(0.857);">z 0.00</span>
<span style="left:427.6px;top:2px;font-size:12px;transform:scaleX(0.965);">Predeterminada</span>
<span style="left:589px;top:2px;font-size:12px;transform:scaleX(0.943);">Forzado</span>
<span style="left:652.8px;top:2px;font-size:12px;font-weight:bold;transform:scaleX(1.023);">Orto</span>
<span style="left:704.7px;top:2px;font-size:12px;font-weight:bold;transform:scaleX(0.935);">Planar</span>
<span style="left:759.6px;top:2px;font-size:12px;transform:scaleX(0.975);">RefObj</span>
<span style="left:821.6px;top:2px;font-size:12px;transform:scaleX(0.980);">Grabar historial</span>
<i style="left:55px"></i>
<i style="left:580px"></i>
<i style="left:638px"></i>
<i style="left:692px"></i>
<i style="left:748px"></i>
<i style="left:803px"></i>
<i style="left:917px"></i>
<div class="sw"></div>
</div><div id="stb" class="abs"></div>
</body></html>
